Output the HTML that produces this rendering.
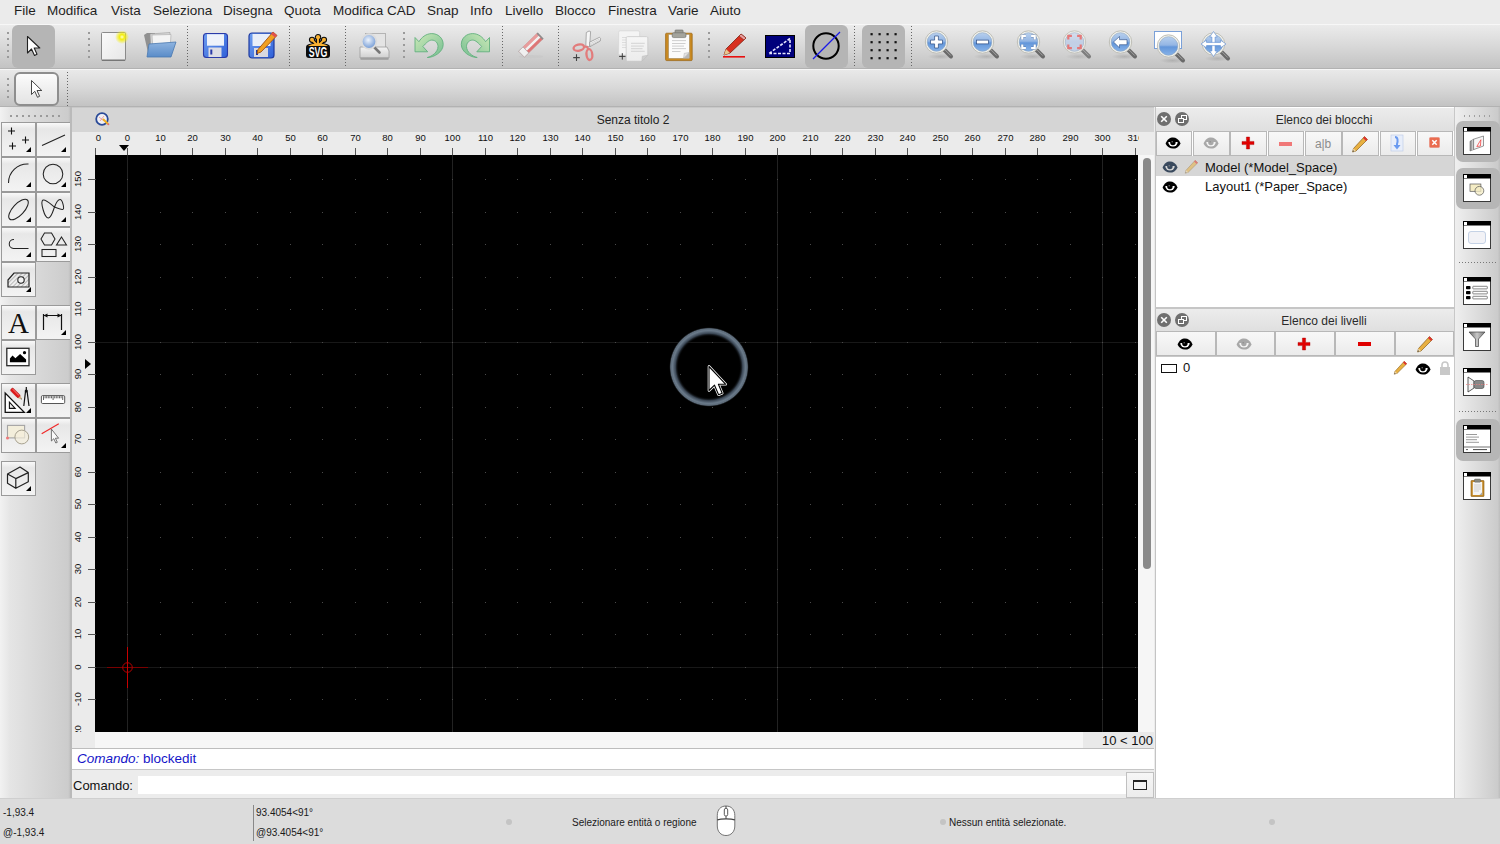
<!DOCTYPE html>
<html><head><meta charset="utf-8">
<style>
*{box-sizing:border-box;margin:0;padding:0}
html,body{width:1500px;height:844px;overflow:hidden;background:#ececec;font-family:"Liberation Sans",sans-serif;color:#000}
.a{position:absolute}
#menubar{position:absolute;left:0;top:0;width:1500px;height:24px;background:#ebebeb}
#menubar span{position:absolute;top:3px;font-size:13.5px;color:#1f1f1f;white-space:nowrap}
#tb1{position:absolute;left:0;top:24px;width:1500px;height:45px;background:linear-gradient(#ebebeb,#dadada 45%,#c3c3c3);border-top:1px solid #f7f7f7;border-bottom:1px solid #b2b2b2}
#tb2{position:absolute;left:0;top:69px;width:1500px;height:38px;background:linear-gradient(#e9e9e9,#d8d8d8 50%,#c3c3c3);border-top:1px solid #f6f6f6;border-bottom:1px solid #b2b2b2}
.grip{position:absolute;width:2px;background-image:radial-gradient(circle,#9a9a9a 0.9px,transparent 1.1px);background-size:2px 6px}
.vsep{position:absolute;width:1px;background-image:linear-gradient(#666 50%,transparent 50%);background-size:1px 3px}
.hsep{position:absolute;height:1px;background-image:linear-gradient(90deg,#666 50%,transparent 50%);background-size:3px 1px}
#leftpanel{position:absolute;left:0;top:107px;width:71px;height:691px;background:linear-gradient(90deg,#f2f2f2 0,#e5e5e5 14%,#d9d9d9 50%,#cccccc 96%,#bcbcbc 100%)}
.tbtn{position:absolute;width:35px;height:35px;background:linear-gradient(#f9f9f9 0,#e7e7e7 18%,#ececec 50%,#f3f3f3 100%);border:1px solid #9a9a9a}
.tbtn .tri{position:absolute;right:4px;bottom:4px;width:0;height:0;border-left:5px solid transparent;border-bottom:5px solid #000}
#mdi{position:absolute;left:72px;top:107px;width:1082px;height:642px;background:#ebebeb}
.rl{position:absolute;width:40px;text-align:center;font-size:9.5px;line-height:12px;color:#111;top:132px;height:12px}
.vl{position:absolute;width:40px;text-align:center;font-size:9.5px;line-height:12px;color:#111;transform:rotate(-90deg)}
#cmd{position:absolute;left:72px;top:748px;width:1082px;height:50px;background:#ececec}
#status{position:absolute;left:0;top:798px;width:1500px;height:46px;background:#dcdcdc;border-top:1px solid #cfcfcf}
#status span{position:absolute;font-size:10px;color:#1a1a1a;white-space:nowrap}
#dock{position:absolute;left:1155px;top:107px;width:300px;height:691px;background:#fff}
.dtitle{position:absolute;left:0;width:301px;height:23px;background:linear-gradient(#ececec,#dfdfdf);}
.dtitle .t{position:absolute;left:36px;width:264px;text-align:center;top:4px;font-size:12px;color:#2a2a2a}
.dbtn{position:absolute;height:25px;background:linear-gradient(#f8f8f8,#ebebeb);border:1px solid #b8b8b8}
.circ{position:absolute;width:14px;height:14px;border-radius:50%;background:#6f6f6f}
#rtb{position:absolute;left:1455px;top:107px;width:45px;height:691px;background:linear-gradient(90deg,#efefef,#dcdcdc 50%,#cbcbcb 95%,#bdbdbd)}
.rbtn{position:absolute;left:1px;width:42px;height:42px;border-radius:7px;background:#b9b9b9}
.wicon{position:absolute;left:8px;width:28px;height:28px;background:#fff;border:1px solid #222}
.wicon:before{content:"";position:absolute;left:0;top:0;width:26px;height:5px;background:#000}
.wicon:after{content:"";position:absolute;left:1px;top:1px;width:4px;height:4px;background:#fff}
</style></head><body>

<div id="menubar">
<span style="left:14px">File</span>
<span style="left:47px">Modifica</span>
<span style="left:111px">Vista</span>
<span style="left:153px">Seleziona</span>
<span style="left:223px">Disegna</span>
<span style="left:284px">Quota</span>
<span style="left:333px">Modifica CAD</span>
<span style="left:427px">Snap</span>
<span style="left:470px">Info</span>
<span style="left:505px">Livello</span>
<span style="left:555px">Blocco</span>
<span style="left:608px">Finestra</span>
<span style="left:668px">Varie</span>
<span style="left:710px">Aiuto</span>
</div>

<div id="tb1"><div class="grip" style="left:7px;top:5px;height:28px"></div>
<div class="a" style="left:12px;top:0px;width:43px;height:43px;border-radius:6px;background:#b5b5b5"></div>
<svg class="a" style="left:26px;top:10px" width="16" height="22" viewBox="0 0 16 22"><path d="M1.5 1.5 L1.5 18 L5.5 14 L8.5 20.5 L11 19.3 L8.2 13 L13.8 13 Z" fill="#fff" stroke="#222" stroke-width="1.1" stroke-linejoin="round"/></svg>
<div class="grip" style="left:88px;top:5px;height:28px"></div>
<!-- new -->
<svg class="a" style="left:100px;top:6px" width="30" height="32">
 <defs><radialGradient id="glow"><stop offset="0" stop-color="#ffffd0"/><stop offset=".35" stop-color="#f4ee10"/><stop offset="1" stop-color="#f4ee10" stop-opacity="0"/></radialGradient>
 <linearGradient id="pg" x1="0" y1="0" x2="1" y2="1"><stop offset="0" stop-color="#fafafa"/><stop offset="1" stop-color="#e6e6e6"/></linearGradient></defs>
 <rect x="1.5" y="1.5" width="24" height="28" fill="url(#pg)" stroke="#8a8a8a" rx="1"/>
 <rect x="2" y="28.5" width="23" height="1.5" fill="#777"/>
 <circle cx="22" cy="6" r="7" fill="url(#glow)"/>
</svg>
<!-- open -->
<svg class="a" style="left:143px;top:6px" width="36" height="28">
 <defs><linearGradient id="fb" x1="0" y1="0" x2="0" y2="1"><stop offset="0" stop-color="#8fb4e0"/><stop offset="1" stop-color="#5a8cc8"/></linearGradient></defs>
 <path d="M1 4 L4 2 L12 2 L12 22 L6 26 Z" fill="#909090"/>
 <path d="M7 3 L27 1.5 L26 18 L8 20 Z" fill="#d8d8d8" stroke="#9a9a9a" stroke-width=".6"/>
 <path d="M9 4 L28 3.5 L27 19 L10 21 Z" fill="#f4f4f4" stroke="#a8a8a8" stroke-width=".6"/>
 <path d="M6 13 L33 11 L28 26 L4 26 Z" fill="url(#fb)" stroke="#4a78b0" stroke-width=".8"/>
</svg>
<div class="vsep" style="left:187px;top:1px;height:41px"></div>
<!-- save -->
<svg class="a" style="left:202px;top:7px" width="28" height="28">
 <defs><linearGradient id="fl" x1="0" y1="0" x2="1" y2="1"><stop offset="0" stop-color="#6f9ff0"/><stop offset="1" stop-color="#2f60d8"/></linearGradient></defs>
 <rect x="1.5" y="1.5" width="24" height="24" rx="3" fill="url(#fl)" stroke="#2a3aa8" stroke-width="1.1"/>
 <rect x="5" y="2.2" width="17" height="11.5" fill="#eef2fa"/>
 <rect x="6.5" y="15.5" width="13" height="9.5" fill="#dcdce4"/>
 <rect x="8.3" y="17.5" width="2" height="5" fill="#2a3aa8"/>
</svg>
<!-- save as -->
<svg class="a" style="left:248px;top:6px" width="30" height="29">
 <rect x="1" y="2" width="25" height="25" rx="3" fill="url(#fl)" stroke="#1e3aa0" stroke-width="1.2"/>
 <rect x="4.5" y="3" width="18" height="12" fill="#e8eef8"/>
 <rect x="6" y="17" width="14" height="9" fill="#d8d8e0"/>
 <rect x="8" y="19" width="2" height="5" fill="#1e3aa0"/>
 <path d="M25 1 L29 4.5 L13 21 L9 22.5 L10 18.5 Z" fill="#f0a020" stroke="#a05010" stroke-width=".9"/>
 <path d="M25 1 L29 4.5 L27 6.5 L23 3 Z" fill="#e05050"/>
</svg>
<div class="vsep" style="left:289px;top:1px;height:41px"></div>
<!-- svg -->
<svg class="a" style="left:305px;top:8px" width="27" height="26">
 <g fill="#0c0c0c" stroke="#0c0c0c" stroke-width="2.2" stroke-linejoin="round"><circle cx="13" cy="4.2" r="2.1"/><circle cx="7" cy="6.8" r="2"/><circle cx="19" cy="6.8" r="2"/><path d="M3 12.9 C 6 11.2, 9 10.8, 13 10.6 C 17 10.8, 20 11.2, 23 12.9 Z"/></g>
 <g fill="none" stroke="#0c0c0c"><path d="M13 4.2 V12 M7 6.8 L12 12 M19 6.8 L14 12" stroke-width="4.2" stroke-linecap="round"/></g>
 <rect x="1" y="11.5" width="24" height="13.5" rx="3" fill="#0c0c0c"/>
 <g fill="#f9b233"><circle cx="13" cy="4.2" r="2.1"/><circle cx="7" cy="6.8" r="2"/><circle cx="19" cy="6.8" r="2"/><path d="M3 12.9 C 6 11.2, 9 10.8, 13 10.6 C 17 10.8, 20 11.2, 23 12.9 Z"/></g>
 <g fill="none" stroke="#f9b233"><path d="M13 4.2 V12 M7 6.8 L12 12 M19 6.8 L14 12" stroke-width="1.9" stroke-linecap="round"/></g>
 <text x="13" y="24" font-family="Liberation Sans" font-weight="bold" font-size="14" fill="#fff" text-anchor="middle" textLength="18.6" lengthAdjust="spacingAndGlyphs">SVG</text>
</svg>
<div class="vsep" style="left:345px;top:1px;height:41px"></div>
<!-- print preview -->
<svg class="a" style="left:358px;top:7px" width="32" height="29">
 <defs><linearGradient id="pr" x1="0" y1="0" x2="0" y2="1"><stop offset="0" stop-color="#f4f4f4"/><stop offset="1" stop-color="#cfcfcf"/></linearGradient>
 <radialGradient id="lens" cx=".45" cy=".4" r=".6"><stop offset="0" stop-color="#eef4fc"/><stop offset="1" stop-color="#6f98d4"/></radialGradient></defs>
 <rect x="7.5" y="1.5" width="20" height="14" fill="#e4e4e4" stroke="#a8a8a8" stroke-width=".8"/>
 <path d="M2 15 L29 15 L31 19 L31 26 L2 26 L2 19 Z" fill="url(#pr)" stroke="#9c9c9c" stroke-width=".8"/>
 <rect x="2.5" y="25.5" width="28" height="2.5" fill="#8a8a8a" opacity=".55"/>
 <line x1="15" y1="14" x2="21.5" y2="20.5" stroke="#777" stroke-width="2.6" stroke-linecap="round"/>
 <circle cx="11" cy="9.5" r="7.3" fill="url(#lens)" stroke="#dcdcdc" stroke-width="1.8"/>
</svg>
<div class="grip" style="left:403px;top:5px;height:28px"></div>
<!-- undo -->
<svg class="a" style="left:410px;top:3px" width="40" height="34">
 <defs><linearGradient id="ug" x1="0" y1="0" x2="1" y2="1"><stop offset="0" stop-color="#cde9b8"/><stop offset="1" stop-color="#74be90"/></linearGradient></defs>
 <path d="M5 9.5 L5 23.8 L17.7 23.8 L12.9 18.5 C 16 15, 19 12.1, 21.8 12.1 C 25.5 12.1, 28 15, 28 18.5 C 28 24, 22 28.5, 17.3 29.5 C 24 29.5, 33.2 24, 33.2 16.5 C 33.2 10, 28 5.6, 21.8 5.6 C 16 5.6, 11.5 9.5, 8.9 13.7 Z" fill="url(#ug)" stroke="#62b07e" stroke-width=".9" stroke-linejoin="round"/>
</svg>
<!-- redo -->
<svg class="a" style="left:455.5px;top:3px" width="40" height="34">
 <path d="M5 9.5 L5 23.8 L17.7 23.8 L12.9 18.5 C 16 15, 19 12.1, 21.8 12.1 C 25.5 12.1, 28 15, 28 18.5 C 28 24, 22 28.5, 17.3 29.5 C 24 29.5, 33.2 24, 33.2 16.5 C 33.2 10, 28 5.6, 21.8 5.6 C 16 5.6, 11.5 9.5, 8.9 13.7 Z" transform="translate(38.5 0) scale(-1 1)" fill="url(#ug)" stroke="#62b07e" stroke-width=".9" stroke-linejoin="round"/>
</svg>
<div class="vsep" style="left:502px;top:1px;height:41px"></div>
<!-- eraser -->
<svg class="a" style="left:512px;top:1px" width="40" height="38">
 <ellipse cx="19" cy="30.6" rx="12.5" ry="1.6" fill="#c8c8c8" opacity=".8"/>
 <g transform="translate(18.9 19.05) rotate(-44.2)">
  <rect x="-13.1" y="-4.15" width="26.2" height="8.3" fill="#de7676" stroke="#c8a0a0" stroke-width=".5"/>
  <rect x="-7" y="-4.15" width="20.1" height="2.85" fill="#e89c9c"/>
  <rect x="-7" y="-1.3" width="20.1" height="2.6" fill="#f2f2f2"/>
  <rect x="-13.1" y="-4.15" width="6.1" height="8.3" fill="#f0f0f0" stroke="#a8a8a8" stroke-width=".6"/>
  <rect x="12" y="-4.15" width="1.6" height="8.3" fill="#8c8c8c"/>
 </g>
</svg>
<div class="vsep" style="left:558px;top:1px;height:41px"></div>
<!-- cut -->
<svg class="a" style="left:568px;top:1px" width="40" height="38">
 <path d="M18.3 6.5 L21 5 L22.6 5.6 L21.6 20.5 L17.8 21 Z" fill="#f6f6f6" stroke="#8c8c8c" stroke-width=".7" stroke-linejoin="round"/>
 <path d="M21.6 16.2 L31.5 11.3 L32.5 12.3 L32.3 15 L22 20.6 Z" fill="#f6f6f6" stroke="#8c8c8c" stroke-width=".7" stroke-linejoin="round"/>
 <path d="M22.5 17.6 L31.5 13 M22.4 19.2 L31.8 14.3" stroke="#b0b0b0" stroke-width=".5"/>
 <ellipse cx="10.8" cy="21.6" rx="5.3" ry="3.1" transform="rotate(-12 10.8 21.6)" fill="none" stroke="#e27c7c" stroke-width="2.3"/>
 <ellipse cx="21.4" cy="28.6" rx="2.9" ry="5.4" transform="rotate(-6 21.4 28.6)" fill="none" stroke="#e27c7c" stroke-width="2.3"/>
 <path d="M15.5 20.5 L19 20.8 L20.5 23.5" fill="none" stroke="#e27c7c" stroke-width="2.2"/>
 <path d="M5.2 31.6 H11.8 M8.5 28.3 V34.9" stroke="#444" stroke-width="1.1"/>
</svg>
<!-- copy -->
<svg class="a" style="left:612px;top:1px" width="86" height="38">
 <defs><linearGradient id="pgc" x1="0" y1="0" x2="0" y2="1"><stop offset="0" stop-color="#f6f6f6"/><stop offset="1" stop-color="#ececec"/></linearGradient></defs>
 <rect x="6.6" y="4.8" width="21" height="24.2" rx="1.5" fill="#f4f4f4" stroke="#d4d4d4" stroke-width=".7"/>
 <g stroke="#dadada" stroke-width=".9"><line x1="10" y1="11.5" x2="14" y2="11.5"/><line x1="10" y1="14" x2="14" y2="14"/><line x1="10" y1="16.5" x2="14" y2="16.5"/><line x1="10" y1="19" x2="14" y2="19"/><line x1="10" y1="21.5" x2="14" y2="21.5"/></g>
 <path d="M15.5 10.6 H34.5 A1.3 1.3 0 0 1 35.8 11.9 V29.3 L29.8 35.3 H15.5 A1.3 1.3 0 0 1 14.2 34 V11.9 A1.3 1.3 0 0 1 15.5 10.6 Z" fill="url(#pgc)" stroke="#c4c4c4" stroke-width=".7"/>
 <path d="M29.8 35.3 L30.3 30.2 L35.8 29.3 Z" fill="#cfcfcf" stroke="#b8b8b8" stroke-width=".5"/>
 <g stroke="#d0d0d0" stroke-width=".9"><line x1="19" y1="17.3" x2="32.7" y2="17.3"/><line x1="19" y1="20.1" x2="31.8" y2="20.1"/><line x1="19" y1="22.7" x2="30.5" y2="22.7"/><line x1="19" y1="25.3" x2="32.7" y2="25.3"/></g>
 <path d="M7.1 30.4 H13.5 M10.3 27.2 V33.6" stroke="#3a3a3a" stroke-width="1"/>
 <!-- paste -->
 <rect x="53.6" y="7.2" width="26.6" height="27.4" rx="1" fill="#c98a22" stroke="#9a6210" stroke-width=".7"/>
 <rect x="56.8" y="8.6" width="20.4" height="23.6" fill="#fbfbfb" stroke="#9a9a9a" stroke-width=".4"/>
 <path d="M71.5 32.2 L77.2 26.5 V32.2 Z" fill="#b8b8b8"/>
 <path d="M71.5 32.2 L72.3 27.3 L77.2 26.5 Z" fill="#e6e6e6" stroke="#a0a0a0" stroke-width=".4"/>
 <rect x="63" y="4" width="8.1" height="3.6" rx=".8" fill="#9c9c94" stroke="#6a6a64" stroke-width=".6"/>
 <rect x="60.2" y="6.8" width="13.8" height="4.8" rx="1.4" fill="#a4a49c" stroke="#6a6a64" stroke-width=".6"/>
 <g stroke="#c8c8c8" stroke-width=".9"><line x1="60" y1="14.6" x2="74" y2="14.6"/><line x1="60" y1="17.5" x2="73.5" y2="17.5"/><line x1="60" y1="20.1" x2="72" y2="20.1"/><line x1="60" y1="22.6" x2="74" y2="22.6"/><line x1="60" y1="25.5" x2="68.5" y2="25.5"/></g>
</svg>
<div class="grip" style="left:708px;top:5px;height:28px"></div>
<!-- pencil red line -->
<svg class="a" style="left:722px;top:8px" width="26" height="25">
 <path d="M19 1 L24 5 L8 20 L2 22 L4 16 Z" fill="#d83020" stroke="#802010" stroke-width=".8"/>
 <path d="M19 1 L24 5 L22 7 L17 3 Z" fill="#e8a0a0" stroke="#802010" stroke-width=".6"/>
 <path d="M4 16 L8 20 L2 22 Z" fill="#e8c890"/>
 <rect x="1" y="23" width="22" height="1.6" fill="#e81010"/>
</svg>
<!-- blue rect -->
<svg class="a" style="left:765px;top:10px" width="30" height="23">
 <rect x=".5" y=".5" width="29" height="22" fill="#00007c" stroke="#000" stroke-width="1"/>
 <path d="M4 18.5 L25 18.5 L25 3.5 Z" fill="none" stroke="#e8e8ff" stroke-width="1.6" stroke-dasharray="3 1.5"/>
</svg>
<div class="a" style="left:805px;top:0px;width:43px;height:43px;border-radius:6px;background:#b5b5b5"></div>
<svg class="a" style="left:810px;top:4.5px" width="32" height="32">
 <circle cx="16" cy="16" r="12.7" fill="none" stroke="#000" stroke-width="2"/>
 <line x1="3" y1="29" x2="30" y2="2" stroke="#1a1ae8" stroke-width="1.2"/>
</svg>
<div class="vsep" style="left:854px;top:1px;height:41px"></div>
<div class="a" style="left:862px;top:0px;width:43px;height:43px;border-radius:6px;background:#b5b5b5"></div>
<svg class="a" style="left:869px;top:8px" width="28" height="28">
 <g fill="#111">
  <rect x="1.5" y="0.1" width="2.2" height="2.2"/><rect x="9.5" y="0.1" width="2.2" height="2.2"/><rect x="17.5" y="0.1" width="2.2" height="2.2"/><rect x="25.5" y="0.1" width="2.2" height="2.2"/>
  <rect x="1.5" y="8.1" width="2.2" height="2.2"/><rect x="9.5" y="8.1" width="2.2" height="2.2"/><rect x="17.5" y="8.1" width="2.2" height="2.2"/><rect x="25.5" y="8.1" width="2.2" height="2.2"/>
  <rect x="1.5" y="16.1" width="2.2" height="2.2"/><rect x="9.5" y="16.1" width="2.2" height="2.2"/><rect x="17.5" y="16.1" width="2.2" height="2.2"/><rect x="25.5" y="16.1" width="2.2" height="2.2"/>
  <rect x="1.5" y="24.1" width="2.2" height="2.2"/><rect x="9.5" y="24.1" width="2.2" height="2.2"/><rect x="17.5" y="24.1" width="2.2" height="2.2"/><rect x="25.5" y="24.1" width="2.2" height="2.2"/>
 </g>
</svg>
<div class="vsep" style="left:911px;top:1px;height:41px"></div>
<svg class="a" style="left:900px;top:0px" width="340" height="45">
<defs>
<linearGradient id="lb" x1="0" y1="0" x2="0" y2="1"><stop offset="0" stop-color="#b8d0ee"/><stop offset=".45" stop-color="#94b6e4"/><stop offset=".55" stop-color="#6396da"/><stop offset="1" stop-color="#86b2e8"/></linearGradient>
<linearGradient id="lbf" x1="0" y1="0" x2="0" y2="1"><stop offset="0" stop-color="#d4def0"/><stop offset=".5" stop-color="#bccde8"/><stop offset="1" stop-color="#c0d0ea"/></linearGradient>
<radialGradient id="sh" cx=".5" cy=".5" r=".5"><stop offset="0" stop-color="#000" stop-opacity=".13"/><stop offset="1" stop-color="#000" stop-opacity="0"/></radialGradient>
</defs>
<ellipse cx="40.5" cy="31.5" rx="13" ry="3" fill="url(#sh)"/><line x1="44.5" y1="25" x2="51.0" y2="31.5" stroke="#6a6a6a" stroke-width="4" stroke-linecap="round"/><line x1="45.5" y1="25.3" x2="50.5" y2="30.3" stroke="#a0a0a0" stroke-width="1" stroke-linecap="round"/><circle cx="36.5" cy="17" r="11.2" fill="#f2f2ec" stroke="#b8b8b0" stroke-width=".9"/><circle cx="36.5" cy="17" r="9.3" fill="url(#lb)" stroke="#8aa2c0" stroke-width=".6"/><path d="M34.6 11 h3.8 v4.1 h4.1 v3.8 h-4.1 v4.1 h-3.8 v-4.1 h-4.1 v-3.8 h4.1 z" fill="#fff" stroke="#2a4a80" stroke-width=".7"/>
<ellipse cx="86.5" cy="31.5" rx="13" ry="3" fill="url(#sh)"/><line x1="90.5" y1="25" x2="97.0" y2="31.5" stroke="#6a6a6a" stroke-width="4" stroke-linecap="round"/><line x1="91.5" y1="25.3" x2="96.5" y2="30.3" stroke="#a0a0a0" stroke-width="1" stroke-linecap="round"/><circle cx="82.5" cy="17" r="11.2" fill="#f2f2ec" stroke="#b8b8b0" stroke-width=".9"/><circle cx="82.5" cy="17" r="9.3" fill="url(#lb)" stroke="#8aa2c0" stroke-width=".6"/><rect x="76.5" y="15.1" width="12" height="3.8" fill="#fff" stroke="#2a4a80" stroke-width=".7"/>
<ellipse cx="132.5" cy="31.5" rx="13" ry="3" fill="url(#sh)"/><line x1="136.5" y1="25" x2="143.0" y2="31.5" stroke="#6a6a6a" stroke-width="4" stroke-linecap="round"/><line x1="137.5" y1="25.3" x2="142.5" y2="30.3" stroke="#a0a0a0" stroke-width="1" stroke-linecap="round"/><circle cx="128.5" cy="17" r="11.2" fill="#f2f2ec" stroke="#b8b8b0" stroke-width=".9"/><circle cx="128.5" cy="17" r="9.3" fill="url(#lb)" stroke="#8aa2c0" stroke-width=".6"/><g stroke="#2a4a80" stroke-width="3.4" opacity=".5"><path d="M122.3 14.4 V10.8 H125.89999999999999" fill="none" stroke="#2a4a80" stroke-width="3.2"/><path d="M122.3 19.599999999999998 V23.2 H125.89999999999999" fill="none" stroke="#2a4a80" stroke-width="3.2"/><path d="M134.7 14.4 V10.8 H131.1" fill="none" stroke="#2a4a80" stroke-width="3.2"/><path d="M134.7 19.599999999999998 V23.2 H131.1" fill="none" stroke="#2a4a80" stroke-width="3.2"/></g><path d="M122.3 14.4 V10.8 H125.89999999999999" fill="none" stroke="#fff" stroke-width="2.2"/><path d="M122.3 19.599999999999998 V23.2 H125.89999999999999" fill="none" stroke="#fff" stroke-width="2.2"/><path d="M134.7 14.4 V10.8 H131.1" fill="none" stroke="#fff" stroke-width="2.2"/><path d="M134.7 19.599999999999998 V23.2 H131.1" fill="none" stroke="#fff" stroke-width="2.2"/>
<g opacity=".8"><ellipse cx="178.5" cy="31.5" rx="13" ry="3" fill="url(#sh)"/><line x1="182.5" y1="25" x2="189.0" y2="31.5" stroke="#6a6a6a" stroke-width="4" stroke-linecap="round"/><line x1="183.5" y1="25.3" x2="188.5" y2="30.3" stroke="#a0a0a0" stroke-width="1" stroke-linecap="round"/><circle cx="174.5" cy="17" r="11.2" fill="#f2f2ec" stroke="#b8b8b0" stroke-width=".9"/><circle cx="174.5" cy="17" r="9.3" fill="url(#lbf)" stroke="#8aa2c0" stroke-width=".6"/><path d="M168.3 14.4 V10.8 H171.9" fill="none" stroke="#e86060" stroke-width="2.2"/><path d="M168.3 19.599999999999998 V23.2 H171.9" fill="none" stroke="#e86060" stroke-width="2.2"/><path d="M180.7 14.4 V10.8 H177.1" fill="none" stroke="#e86060" stroke-width="2.2"/><path d="M180.7 19.599999999999998 V23.2 H177.1" fill="none" stroke="#e86060" stroke-width="2.2"/></g>
<ellipse cx="224.5" cy="31.5" rx="13" ry="3" fill="url(#sh)"/><line x1="228.5" y1="25" x2="235.0" y2="31.5" stroke="#6a6a6a" stroke-width="4" stroke-linecap="round"/><line x1="229.5" y1="25.3" x2="234.5" y2="30.3" stroke="#a0a0a0" stroke-width="1" stroke-linecap="round"/><circle cx="220.5" cy="17" r="11.2" fill="#f2f2ec" stroke="#b8b8b0" stroke-width=".9"/><circle cx="220.5" cy="17" r="9.3" fill="url(#lb)" stroke="#8aa2c0" stroke-width=".6"/><path d="M213.5 17 L219.5 11.5 V14.7 H227.0 V19.7 H219.5 V22.8 Z" fill="#fff" stroke="#2a4a80" stroke-width=".6"/>
<rect x="254.5" y="6.5" width="27" height="17" fill="#fff" stroke="#7aa0d8" stroke-width="1"/>
<ellipse cx="272.5" cy="35.5" rx="13" ry="3" fill="url(#sh)"/><line x1="276.5" y1="29" x2="283.0" y2="35.5" stroke="#6a6a6a" stroke-width="4" stroke-linecap="round"/><line x1="277.5" y1="29.3" x2="282.5" y2="34.3" stroke="#a0a0a0" stroke-width="1" stroke-linecap="round"/><circle cx="268.5" cy="21" r="11.2" fill="#f2f2ec" stroke="#b8b8b0" stroke-width=".9"/><circle cx="268.5" cy="21" r="9.3" fill="url(#lb)" stroke="#8aa2c0" stroke-width=".6"/>
<ellipse cx="317.5" cy="33.5" rx="13" ry="3" fill="url(#sh)"/><line x1="321.5" y1="27" x2="328.0" y2="33.5" stroke="#6a6a6a" stroke-width="4" stroke-linecap="round"/><line x1="322.5" y1="27.3" x2="327.5" y2="32.3" stroke="#a0a0a0" stroke-width="1" stroke-linecap="round"/><circle cx="313.5" cy="19" r="11.2" fill="#f2f2ec" stroke="#b8b8b0" stroke-width=".9"/><circle cx="313.5" cy="19" r="9.3" fill="url(#lb)" stroke="#8aa2c0" stroke-width=".6"/><g fill="#fff" stroke="#5a8ad0" stroke-width=".6">
<path d="M313.5 6.5 L317.3 12 H315.1 V26 H317.3 L313.5 31.5 L309.7 26 H311.9 V12 H309.7 Z"/>
<path d="M301.0 19 L306.5 15.2 V17.4 H320.5 V15.2 L326.0 19 L320.5 22.8 V20.6 H306.5 V22.8 Z"/>
</g>
</svg>
</div>
<div id="tb2"><div class="grip" style="left:7px;top:5.5px;height:26px"></div>
<div class="a" style="left:14px;top:2px;width:45px;height:34px;border-radius:6px;border:2px solid #8e8e8e;background:linear-gradient(#fcfcfc,#eeeeee 55%,#e4e4e4)"></div>
<svg class="a" style="left:30px;top:9px" width="14" height="20" viewBox="0 0 14 20"><path d="M1.5 1.5 L1.5 15.5 L4.8 12.3 L7.5 18.3 L9.6 17.3 L7 11.5 L11.8 11.5 Z" fill="#fff" stroke="#333" stroke-width=".9" stroke-linejoin="round"/></svg>
<div class="vsep" style="left:67px;top:2px;height:35px"></div>
</div>

<div id="leftpanel"><div class="grip" style="left:8px;top:7px;width:56px;height:4px;background-image:radial-gradient(circle,#9a9a9a 0.9px,transparent 1.1px);background-size:6px 4px"></div>
<div class="tbtn" style="left:1px;top:15px;width:35px;height:35px"><svg class="a" style="left:0;top:0" width="33" height="33"><path d="M6.0 8 H13.0 M9.5 4.5 V11.5" stroke="#111" stroke-width="1.1"/><path d="M20.0 17 H27.0 M23.5 13.5 V20.5" stroke="#111" stroke-width="1.1"/><path d="M7.0 23 H14.0 M10.5 19.5 V26.5" stroke="#111" stroke-width="1.1"/></svg><div class="tri"></div></div>
<div class="tbtn" style="left:36px;top:15px;width:35px;height:35px"><svg class="a" style="left:0;top:0" width="33" height="33"><path d="M5 22.5 L28 12" fill="none" stroke="#222" stroke-width="1.05"/></svg><div class="tri"></div></div>
<div class="tbtn" style="left:1px;top:50px;width:35px;height:35px"><svg class="a" style="left:0;top:0" width="33" height="33"><path d="M6.5 25 A19 19 0 0 1 26.5 6" fill="none" stroke="#222" stroke-width="1.05"/></svg><div class="tri"></div></div>
<div class="tbtn" style="left:36px;top:50px;width:35px;height:35px"><svg class="a" style="left:0;top:0" width="33" height="33"><circle cx="16" cy="16" r="9.8" fill="none" stroke="#222" stroke-width="1.05"/></svg><div class="tri"></div></div>
<div class="tbtn" style="left:1px;top:85px;width:35px;height:35px"><svg class="a" style="left:0;top:0" width="33" height="33"><ellipse cx="16.5" cy="16.5" rx="13" ry="5.6" transform="rotate(-47 16.5 16.5)" fill="none" stroke="#222" stroke-width="1.05"/></svg><div class="tri"></div></div>
<div class="tbtn" style="left:36px;top:85px;width:35px;height:35px"><svg class="a" style="left:0;top:0" width="33" height="33"><path d="M17.5 14 C14 11.5, 9 6, 6 7 C3 8.5, 7.5 25.5, 11.5 25 C14.5 24.5, 16 18, 17.5 14 C19 10, 21 6.5, 23 6.5 C25.5 6.5, 27.5 15.5, 26 16.3 C24.5 17, 21 15.5, 17.5 14 Z" fill="none" stroke="#222" stroke-width="1.05"/></svg><div class="tri"></div></div>
<div class="tbtn" style="left:1px;top:120px;width:35px;height:35px"><svg class="a" style="left:0;top:0" width="33" height="33"><path d="M12 11.5 A4.5 4.5 0 0 0 11.5 20.5 L26.5 20.5" fill="none" stroke="#222" stroke-width="1.05"/></svg><div class="tri"></div></div>
<div class="tbtn" style="left:36px;top:120px;width:35px;height:35px"><svg class="a" style="left:0;top:0" width="33" height="33"><path d="M7.5 5 H14.5 L18 11 L14.5 17 H7.5 L4 11 Z" fill="none" stroke="#222" stroke-width="1.05"/><path d="M24.5 9 L29.5 17 H19.5 Z" fill="none" stroke="#222" stroke-width="1.05"/><rect x="5" y="21.5" width="14" height="7" fill="none" stroke="#222" stroke-width="1.05"/></svg><div class="tri"></div></div>
<div class="tbtn" style="left:1px;top:155px;width:35px;height:35px"><svg class="a" style="left:0;top:0" width="33" height="33"><defs><pattern id="ht" width="3" height="3" patternUnits="userSpaceOnUse" patternTransform="rotate(45)"><line x1="0" y1="0" x2="0" y2="3" stroke="#666" stroke-width=".8"/></pattern></defs><path d="M6 17 L12 10 H27 V24 H6 Z" fill="url(#ht)" stroke="#222" stroke-width="1.2"/><circle cx="19" cy="17" r="3.2" fill="#f2f2f2" stroke="#222" stroke-width="1.1"/></svg><div class="tri"></div></div>
<div class="tbtn" style="left:1px;top:198px;width:35px;height:35px"><svg class="a" style="left:0;top:0" width="33" height="33"><text x="16.5" y="27" font-family="Liberation Serif" font-size="29" text-anchor="middle" fill="#111">A</text></svg></div>
<div class="tbtn" style="left:36px;top:198px;width:35px;height:35px"><svg class="a" style="left:0;top:0" width="33" height="33"><path d="M6.5 8 V24 M24.5 8 V24 M6.5 9.5 H24.5" fill="none" stroke="#111" stroke-width="1.2"/><path d="M6.5 9.5 L10.5 7.5 V11.5 Z M24.5 9.5 L20.5 7.5 V11.5 Z" fill="#111"/></svg><div class="tri"></div></div>
<div class="tbtn" style="left:1px;top:233px;width:35px;height:35px"><svg class="a" style="left:0;top:0" width="33" height="33"><rect x="4.8" y="7.3" width="22.2" height="17.4" fill="#fff" stroke="#2a2a2a" stroke-width="1.3"/><path d="M7.9 21.3 V17.4 L10.5 14.6 L13.4 17.2 L18.1 13 L24.1 18.6 V21.3 Z" fill="#000"/><circle cx="22.5" cy="11.7" r="1.6" fill="#000"/></svg></div>
<div class="tbtn" style="left:1px;top:276px;width:35px;height:35px"><svg class="a" style="left:0;top:0" width="33" height="33"><path d="M3.2 9 V28.4 H22.3 Z" fill="#fff" stroke="#111" stroke-width="1.3" stroke-linejoin="miter"/><path d="M7.4 18.1 V24.4 H13.2 Z" fill="#eee" stroke="#111" stroke-width="1.1"/><g transform="translate(14.2 9.8) rotate(45)"><rect x="-7" y="-1.9" width="11.5" height="3.8" rx="1.6" fill="#e01818" stroke="#a01010" stroke-width=".4"/><path d="M4.5 -1.9 L8 0 L4.5 1.9 Z" fill="#d8b080"/><path d="M6.8 -.6 L8 0 L6.8 .6 Z" fill="#333"/><rect x="-6" y="-1.2" width="9" height=".8" fill="#f07070"/></g><path d="M24.3 3 V6 M23.5 7.5 L21.8 22 M25.1 7.5 L27 22" fill="none" stroke="#111" stroke-width="1.2"/><circle cx="24.3" cy="7" r="1.6" fill="#111"/></svg><div class="tri"></div></div>
<div class="tbtn" style="left:36px;top:276px;width:35px;height:35px"><svg class="a" style="left:0;top:0" width="33" height="33"><rect x="4.4" y="11.6" width="23.3" height="7.9" rx="1.2" fill="#fff" stroke="#444" stroke-width=".9"/><line x1="6.5" y1="12.2" x2="6.5" y2="16" stroke="#222" stroke-width=".7"/><line x1="8.1" y1="12.2" x2="8.1" y2="14.3" stroke="#222" stroke-width=".7"/><line x1="9.7" y1="12.2" x2="9.7" y2="14.3" stroke="#222" stroke-width=".7"/><line x1="11.3" y1="12.2" x2="11.3" y2="14.3" stroke="#222" stroke-width=".7"/><line x1="12.9" y1="12.2" x2="12.9" y2="14.3" stroke="#222" stroke-width=".7"/><line x1="14.5" y1="12.2" x2="14.5" y2="14.3" stroke="#222" stroke-width=".7"/><line x1="16.1" y1="12.2" x2="16.1" y2="16" stroke="#222" stroke-width=".7"/><line x1="17.7" y1="12.2" x2="17.7" y2="14.3" stroke="#222" stroke-width=".7"/><line x1="19.3" y1="12.2" x2="19.3" y2="14.3" stroke="#222" stroke-width=".7"/><line x1="20.9" y1="12.2" x2="20.9" y2="14.3" stroke="#222" stroke-width=".7"/><line x1="22.5" y1="12.2" x2="22.5" y2="14.3" stroke="#222" stroke-width=".7"/><line x1="24.1" y1="12.2" x2="24.1" y2="14.3" stroke="#222" stroke-width=".7"/><line x1="25.7" y1="12.2" x2="25.7" y2="16" stroke="#222" stroke-width=".7"/></svg></div>
<div class="tbtn" style="left:1px;top:311px;width:35px;height:35px"><svg class="a" style="left:0;top:0" width="33" height="33"><rect x="5.5" y="6.4" width="17.1" height="12.5" fill="#f3eedb" stroke="#a4a4a4" stroke-width="1.1"/><circle cx="19.8" cy="18" r="6.9" fill="#f3eedb" fill-opacity=".7" stroke="#a8a290" stroke-width="1"/><circle cx="5.5" cy="18.9" r="1.5" fill="#f07878"/></svg></div>
<div class="tbtn" style="left:36px;top:311px;width:35px;height:35px"><svg class="a" style="left:0;top:0" width="33" height="33"><path d="M4.7 14.7 L21.8 4.7" stroke="#f02828" stroke-width="1.2"/><path d="M14.4 10.1 V22 L16.8 19.7 L18.8 24 L20.3 23.3 L18.4 19.2 H21.6 Z" fill="#fafafa" stroke="#555" stroke-width=".8" stroke-linejoin="round"/></svg><div class="tri"></div></div>
<div class="tbtn" style="left:1px;top:354px;width:35px;height:35px"><svg class="a" style="left:0;top:0" width="33" height="33"><path d="M5.5 12 L18 5 L26.3 10.6 L13.8 16.6 Z M5.5 12 V21.2 L13.8 26.3 L26.3 19.8 V10.6 M13.8 16.6 V26.3" fill="none" stroke="#222" stroke-width="1.2" stroke-linejoin="round"/></svg><div class="tri"></div></div></div>
<div class="a" style="left:70px;top:107px;width:2px;height:691px;background:#bababa"></div><div class="a" style="left:72px;top:132px;width:1px;height:616px;background:#f4f4f4"></div>

<div id="mdi">
  <div class="a" style="left:0;top:0;width:1082px;height:25px;background:#d5d5d5;border-top:1px solid #c8c8c8"></div>
  <div class="a" style="left:0;top:6px;width:1122px;text-align:center;font-size:12px;color:#222">Senza titolo 2</div>
  <svg class="a" style="left:23px;top:5px" width="16" height="15">
 <circle cx="7" cy="7" r="5.8" fill="#f0f0f4" stroke="#2a4a98" stroke-width="1.8"/>
 <path d="M4 5 L9 9 M5 9 L9 4" stroke="#e07070" stroke-width=".6"/>
 <path d="M8 7 L13 12" stroke="#f0b020" stroke-width="2"/>
 <circle cx="13.3" cy="12.3" r="1" fill="#e07070"/>
</svg>

  <div class="a" style="left:0;top:25px;width:1082px;height:23px;background:#ebebeb"></div>
  <div class="a" style="left:0;top:48px;width:23px;height:577px;background:#ebebeb"></div>
  <div class="a" style="left:1066px;top:48px;width:16px;height:577px;background:#f6f6f6"></div>
  <div class="a" style="left:1071px;top:51px;width:8px;height:411px;border-radius:4px;background:#8a8a8a"></div>
  <div class="a" style="left:23px;top:625px;width:1059px;height:17px;background:#f6f6f6"></div>
  <div class="a" style="left:1011px;top:625px;width:71px;height:17px;background:#e9e9e9"></div>
  <div class="a" style="left:1011px;top:626px;width:70px;text-align:right;font-size:13px;color:#111">10 &lt; 100</div>
</div>
<div style="position:absolute;left:0;top:0;width:1500px;height:844px;overflow:hidden">
<div style="position:absolute;left:95px;top:132px;width:1044px;height:23px;overflow:hidden">
 <div style="position:absolute;left:-95px;top:-132px;width:1500px;height:200px"><div style="position:absolute;left:95px;top:148px;width:1px;height:7px;background:#555"></div><div class="rl" style="left:78.5px;">0</div><div style="position:absolute;left:127px;top:148px;width:1px;height:7px;background:#555"></div><div class="rl" style="left:107.5px;">0</div><div style="position:absolute;left:160px;top:148px;width:1px;height:7px;background:#555"></div><div class="rl" style="left:140.5px;">10</div><div style="position:absolute;left:192px;top:148px;width:1px;height:7px;background:#555"></div><div class="rl" style="left:172.5px;">20</div><div style="position:absolute;left:225px;top:148px;width:1px;height:7px;background:#555"></div><div class="rl" style="left:205.5px;">30</div><div style="position:absolute;left:257px;top:148px;width:1px;height:7px;background:#555"></div><div class="rl" style="left:237.5px;">40</div><div style="position:absolute;left:290px;top:148px;width:1px;height:7px;background:#555"></div><div class="rl" style="left:270.5px;">50</div><div style="position:absolute;left:322px;top:148px;width:1px;height:7px;background:#555"></div><div class="rl" style="left:302.5px;">60</div><div style="position:absolute;left:355px;top:148px;width:1px;height:7px;background:#555"></div><div class="rl" style="left:335.5px;">70</div><div style="position:absolute;left:387px;top:148px;width:1px;height:7px;background:#555"></div><div class="rl" style="left:367.5px;">80</div><div style="position:absolute;left:420px;top:148px;width:1px;height:7px;background:#555"></div><div class="rl" style="left:400.5px;">90</div><div style="position:absolute;left:452px;top:148px;width:1px;height:7px;background:#555"></div><div class="rl" style="left:432.5px;">100</div><div style="position:absolute;left:485px;top:148px;width:1px;height:7px;background:#555"></div><div class="rl" style="left:465.5px;">110</div><div style="position:absolute;left:517px;top:148px;width:1px;height:7px;background:#555"></div><div class="rl" style="left:497.5px;">120</div><div style="position:absolute;left:550px;top:148px;width:1px;height:7px;background:#555"></div><div class="rl" style="left:530.5px;">130</div><div style="position:absolute;left:582px;top:148px;width:1px;height:7px;background:#555"></div><div class="rl" style="left:562.5px;">140</div><div style="position:absolute;left:615px;top:148px;width:1px;height:7px;background:#555"></div><div class="rl" style="left:595.5px;">150</div><div style="position:absolute;left:647px;top:148px;width:1px;height:7px;background:#555"></div><div class="rl" style="left:627.5px;">160</div><div style="position:absolute;left:680px;top:148px;width:1px;height:7px;background:#555"></div><div class="rl" style="left:660.5px;">170</div><div style="position:absolute;left:712px;top:148px;width:1px;height:7px;background:#555"></div><div class="rl" style="left:692.5px;">180</div><div style="position:absolute;left:745px;top:148px;width:1px;height:7px;background:#555"></div><div class="rl" style="left:725.5px;">190</div><div style="position:absolute;left:777px;top:148px;width:1px;height:7px;background:#555"></div><div class="rl" style="left:757.5px;">200</div><div style="position:absolute;left:810px;top:148px;width:1px;height:7px;background:#555"></div><div class="rl" style="left:790.5px;">210</div><div style="position:absolute;left:842px;top:148px;width:1px;height:7px;background:#555"></div><div class="rl" style="left:822.5px;">220</div><div style="position:absolute;left:875px;top:148px;width:1px;height:7px;background:#555"></div><div class="rl" style="left:855.5px;">230</div><div style="position:absolute;left:907px;top:148px;width:1px;height:7px;background:#555"></div><div class="rl" style="left:887.5px;">240</div><div style="position:absolute;left:940px;top:148px;width:1px;height:7px;background:#555"></div><div class="rl" style="left:920.5px;">250</div><div style="position:absolute;left:972px;top:148px;width:1px;height:7px;background:#555"></div><div class="rl" style="left:952.5px;">260</div><div style="position:absolute;left:1005px;top:148px;width:1px;height:7px;background:#555"></div><div class="rl" style="left:985.5px;">270</div><div style="position:absolute;left:1037px;top:148px;width:1px;height:7px;background:#555"></div><div class="rl" style="left:1017.5px;">280</div><div style="position:absolute;left:1070px;top:148px;width:1px;height:7px;background:#555"></div><div class="rl" style="left:1050.5px;">290</div><div style="position:absolute;left:1102px;top:148px;width:1px;height:7px;background:#555"></div><div class="rl" style="left:1082.5px;">300</div><div style="position:absolute;left:1135px;top:148px;width:1px;height:7px;background:#555"></div><div class="rl" style="left:1115.5px;">310</div></div>
</div>
<!--HRULERTRI-->
<div style="position:absolute;left:72px;top:155px;width:23px;height:577px;overflow:hidden">
 <div style="position:absolute;left:-72px;top:-155px;width:200px;height:800px"><div class="vl" style="left:57.7px;top:726px;">-20</div><div style="position:absolute;left:88px;top:699px;width:7px;height:1px;background:#555"></div><div class="vl" style="left:57.7px;top:693px;">-10</div><div style="position:absolute;left:88px;top:667px;width:7px;height:1px;background:#555"></div><div class="vl" style="left:57.7px;top:661px;">0</div><div style="position:absolute;left:88px;top:634px;width:7px;height:1px;background:#555"></div><div class="vl" style="left:57.7px;top:628px;">10</div><div style="position:absolute;left:88px;top:602px;width:7px;height:1px;background:#555"></div><div class="vl" style="left:57.7px;top:596px;">20</div><div style="position:absolute;left:88px;top:569px;width:7px;height:1px;background:#555"></div><div class="vl" style="left:57.7px;top:563px;">30</div><div style="position:absolute;left:88px;top:537px;width:7px;height:1px;background:#555"></div><div class="vl" style="left:57.7px;top:531px;">40</div><div style="position:absolute;left:88px;top:504px;width:7px;height:1px;background:#555"></div><div class="vl" style="left:57.7px;top:498px;">50</div><div style="position:absolute;left:88px;top:472px;width:7px;height:1px;background:#555"></div><div class="vl" style="left:57.7px;top:466px;">60</div><div style="position:absolute;left:88px;top:439px;width:7px;height:1px;background:#555"></div><div class="vl" style="left:57.7px;top:433px;">70</div><div style="position:absolute;left:88px;top:407px;width:7px;height:1px;background:#555"></div><div class="vl" style="left:57.7px;top:401px;">80</div><div style="position:absolute;left:88px;top:374px;width:7px;height:1px;background:#555"></div><div class="vl" style="left:57.7px;top:368px;">90</div><div style="position:absolute;left:88px;top:342px;width:7px;height:1px;background:#555"></div><div class="vl" style="left:57.7px;top:336px;">100</div><div style="position:absolute;left:88px;top:309px;width:7px;height:1px;background:#555"></div><div class="vl" style="left:57.7px;top:303px;">110</div><div style="position:absolute;left:88px;top:277px;width:7px;height:1px;background:#555"></div><div class="vl" style="left:57.7px;top:271px;">120</div><div style="position:absolute;left:88px;top:244px;width:7px;height:1px;background:#555"></div><div class="vl" style="left:57.7px;top:238px;">130</div><div style="position:absolute;left:88px;top:212px;width:7px;height:1px;background:#555"></div><div class="vl" style="left:57.7px;top:206px;">140</div><div style="position:absolute;left:88px;top:179px;width:7px;height:1px;background:#555"></div><div class="vl" style="left:57.7px;top:173px;">150</div></div>
</div>
<svg width="1043" height="577" style="position:absolute;left:95px;top:155px;display:block" shape-rendering="crispEdges"><rect width="1043" height="577" fill="#000"/><rect x="32" y="0" width="1" height="577" fill="#222"/><rect x="357" y="0" width="1" height="577" fill="#222"/><rect x="682" y="0" width="1" height="577" fill="#222"/><rect x="1007" y="0" width="1" height="577" fill="#222"/><rect x="0" y="512" width="1043" height="1" fill="#181818"/><rect x="0" y="187" width="1043" height="1" fill="#181818"/><rect x="0" y="544" width="1" height="1" fill="#4a4a4a"/><rect x="0" y="512" width="1" height="1" fill="#4a4a4a"/><rect x="0" y="479" width="1" height="1" fill="#4a4a4a"/><rect x="0" y="447" width="1" height="1" fill="#4a4a4a"/><rect x="0" y="414" width="1" height="1" fill="#4a4a4a"/><rect x="0" y="382" width="1" height="1" fill="#4a4a4a"/><rect x="0" y="349" width="1" height="1" fill="#4a4a4a"/><rect x="0" y="317" width="1" height="1" fill="#4a4a4a"/><rect x="0" y="284" width="1" height="1" fill="#4a4a4a"/><rect x="0" y="252" width="1" height="1" fill="#4a4a4a"/><rect x="0" y="219" width="1" height="1" fill="#4a4a4a"/><rect x="0" y="187" width="1" height="1" fill="#4a4a4a"/><rect x="0" y="154" width="1" height="1" fill="#4a4a4a"/><rect x="0" y="122" width="1" height="1" fill="#4a4a4a"/><rect x="0" y="89" width="1" height="1" fill="#4a4a4a"/><rect x="0" y="57" width="1" height="1" fill="#4a4a4a"/><rect x="0" y="24" width="1" height="1" fill="#4a4a4a"/><rect x="32" y="544" width="1" height="1" fill="#4a4a4a"/><rect x="32" y="512" width="1" height="1" fill="#4a4a4a"/><rect x="32" y="479" width="1" height="1" fill="#4a4a4a"/><rect x="32" y="447" width="1" height="1" fill="#4a4a4a"/><rect x="32" y="414" width="1" height="1" fill="#4a4a4a"/><rect x="32" y="382" width="1" height="1" fill="#4a4a4a"/><rect x="32" y="349" width="1" height="1" fill="#4a4a4a"/><rect x="32" y="317" width="1" height="1" fill="#4a4a4a"/><rect x="32" y="284" width="1" height="1" fill="#4a4a4a"/><rect x="32" y="252" width="1" height="1" fill="#4a4a4a"/><rect x="32" y="219" width="1" height="1" fill="#4a4a4a"/><rect x="32" y="187" width="1" height="1" fill="#4a4a4a"/><rect x="32" y="154" width="1" height="1" fill="#4a4a4a"/><rect x="32" y="122" width="1" height="1" fill="#4a4a4a"/><rect x="32" y="89" width="1" height="1" fill="#4a4a4a"/><rect x="32" y="57" width="1" height="1" fill="#4a4a4a"/><rect x="32" y="24" width="1" height="1" fill="#4a4a4a"/><rect x="65" y="544" width="1" height="1" fill="#4a4a4a"/><rect x="65" y="512" width="1" height="1" fill="#4a4a4a"/><rect x="65" y="479" width="1" height="1" fill="#4a4a4a"/><rect x="65" y="447" width="1" height="1" fill="#4a4a4a"/><rect x="65" y="414" width="1" height="1" fill="#4a4a4a"/><rect x="65" y="382" width="1" height="1" fill="#4a4a4a"/><rect x="65" y="349" width="1" height="1" fill="#4a4a4a"/><rect x="65" y="317" width="1" height="1" fill="#4a4a4a"/><rect x="65" y="284" width="1" height="1" fill="#4a4a4a"/><rect x="65" y="252" width="1" height="1" fill="#4a4a4a"/><rect x="65" y="219" width="1" height="1" fill="#4a4a4a"/><rect x="65" y="187" width="1" height="1" fill="#4a4a4a"/><rect x="65" y="154" width="1" height="1" fill="#4a4a4a"/><rect x="65" y="122" width="1" height="1" fill="#4a4a4a"/><rect x="65" y="89" width="1" height="1" fill="#4a4a4a"/><rect x="65" y="57" width="1" height="1" fill="#4a4a4a"/><rect x="65" y="24" width="1" height="1" fill="#4a4a4a"/><rect x="97" y="544" width="1" height="1" fill="#4a4a4a"/><rect x="97" y="512" width="1" height="1" fill="#4a4a4a"/><rect x="97" y="479" width="1" height="1" fill="#4a4a4a"/><rect x="97" y="447" width="1" height="1" fill="#4a4a4a"/><rect x="97" y="414" width="1" height="1" fill="#4a4a4a"/><rect x="97" y="382" width="1" height="1" fill="#4a4a4a"/><rect x="97" y="349" width="1" height="1" fill="#4a4a4a"/><rect x="97" y="317" width="1" height="1" fill="#4a4a4a"/><rect x="97" y="284" width="1" height="1" fill="#4a4a4a"/><rect x="97" y="252" width="1" height="1" fill="#4a4a4a"/><rect x="97" y="219" width="1" height="1" fill="#4a4a4a"/><rect x="97" y="187" width="1" height="1" fill="#4a4a4a"/><rect x="97" y="154" width="1" height="1" fill="#4a4a4a"/><rect x="97" y="122" width="1" height="1" fill="#4a4a4a"/><rect x="97" y="89" width="1" height="1" fill="#4a4a4a"/><rect x="97" y="57" width="1" height="1" fill="#4a4a4a"/><rect x="97" y="24" width="1" height="1" fill="#4a4a4a"/><rect x="130" y="544" width="1" height="1" fill="#4a4a4a"/><rect x="130" y="512" width="1" height="1" fill="#4a4a4a"/><rect x="130" y="479" width="1" height="1" fill="#4a4a4a"/><rect x="130" y="447" width="1" height="1" fill="#4a4a4a"/><rect x="130" y="414" width="1" height="1" fill="#4a4a4a"/><rect x="130" y="382" width="1" height="1" fill="#4a4a4a"/><rect x="130" y="349" width="1" height="1" fill="#4a4a4a"/><rect x="130" y="317" width="1" height="1" fill="#4a4a4a"/><rect x="130" y="284" width="1" height="1" fill="#4a4a4a"/><rect x="130" y="252" width="1" height="1" fill="#4a4a4a"/><rect x="130" y="219" width="1" height="1" fill="#4a4a4a"/><rect x="130" y="187" width="1" height="1" fill="#4a4a4a"/><rect x="130" y="154" width="1" height="1" fill="#4a4a4a"/><rect x="130" y="122" width="1" height="1" fill="#4a4a4a"/><rect x="130" y="89" width="1" height="1" fill="#4a4a4a"/><rect x="130" y="57" width="1" height="1" fill="#4a4a4a"/><rect x="130" y="24" width="1" height="1" fill="#4a4a4a"/><rect x="162" y="544" width="1" height="1" fill="#4a4a4a"/><rect x="162" y="512" width="1" height="1" fill="#4a4a4a"/><rect x="162" y="479" width="1" height="1" fill="#4a4a4a"/><rect x="162" y="447" width="1" height="1" fill="#4a4a4a"/><rect x="162" y="414" width="1" height="1" fill="#4a4a4a"/><rect x="162" y="382" width="1" height="1" fill="#4a4a4a"/><rect x="162" y="349" width="1" height="1" fill="#4a4a4a"/><rect x="162" y="317" width="1" height="1" fill="#4a4a4a"/><rect x="162" y="284" width="1" height="1" fill="#4a4a4a"/><rect x="162" y="252" width="1" height="1" fill="#4a4a4a"/><rect x="162" y="219" width="1" height="1" fill="#4a4a4a"/><rect x="162" y="187" width="1" height="1" fill="#4a4a4a"/><rect x="162" y="154" width="1" height="1" fill="#4a4a4a"/><rect x="162" y="122" width="1" height="1" fill="#4a4a4a"/><rect x="162" y="89" width="1" height="1" fill="#4a4a4a"/><rect x="162" y="57" width="1" height="1" fill="#4a4a4a"/><rect x="162" y="24" width="1" height="1" fill="#4a4a4a"/><rect x="195" y="544" width="1" height="1" fill="#4a4a4a"/><rect x="195" y="512" width="1" height="1" fill="#4a4a4a"/><rect x="195" y="479" width="1" height="1" fill="#4a4a4a"/><rect x="195" y="447" width="1" height="1" fill="#4a4a4a"/><rect x="195" y="414" width="1" height="1" fill="#4a4a4a"/><rect x="195" y="382" width="1" height="1" fill="#4a4a4a"/><rect x="195" y="349" width="1" height="1" fill="#4a4a4a"/><rect x="195" y="317" width="1" height="1" fill="#4a4a4a"/><rect x="195" y="284" width="1" height="1" fill="#4a4a4a"/><rect x="195" y="252" width="1" height="1" fill="#4a4a4a"/><rect x="195" y="219" width="1" height="1" fill="#4a4a4a"/><rect x="195" y="187" width="1" height="1" fill="#4a4a4a"/><rect x="195" y="154" width="1" height="1" fill="#4a4a4a"/><rect x="195" y="122" width="1" height="1" fill="#4a4a4a"/><rect x="195" y="89" width="1" height="1" fill="#4a4a4a"/><rect x="195" y="57" width="1" height="1" fill="#4a4a4a"/><rect x="195" y="24" width="1" height="1" fill="#4a4a4a"/><rect x="227" y="544" width="1" height="1" fill="#4a4a4a"/><rect x="227" y="512" width="1" height="1" fill="#4a4a4a"/><rect x="227" y="479" width="1" height="1" fill="#4a4a4a"/><rect x="227" y="447" width="1" height="1" fill="#4a4a4a"/><rect x="227" y="414" width="1" height="1" fill="#4a4a4a"/><rect x="227" y="382" width="1" height="1" fill="#4a4a4a"/><rect x="227" y="349" width="1" height="1" fill="#4a4a4a"/><rect x="227" y="317" width="1" height="1" fill="#4a4a4a"/><rect x="227" y="284" width="1" height="1" fill="#4a4a4a"/><rect x="227" y="252" width="1" height="1" fill="#4a4a4a"/><rect x="227" y="219" width="1" height="1" fill="#4a4a4a"/><rect x="227" y="187" width="1" height="1" fill="#4a4a4a"/><rect x="227" y="154" width="1" height="1" fill="#4a4a4a"/><rect x="227" y="122" width="1" height="1" fill="#4a4a4a"/><rect x="227" y="89" width="1" height="1" fill="#4a4a4a"/><rect x="227" y="57" width="1" height="1" fill="#4a4a4a"/><rect x="227" y="24" width="1" height="1" fill="#4a4a4a"/><rect x="260" y="544" width="1" height="1" fill="#4a4a4a"/><rect x="260" y="512" width="1" height="1" fill="#4a4a4a"/><rect x="260" y="479" width="1" height="1" fill="#4a4a4a"/><rect x="260" y="447" width="1" height="1" fill="#4a4a4a"/><rect x="260" y="414" width="1" height="1" fill="#4a4a4a"/><rect x="260" y="382" width="1" height="1" fill="#4a4a4a"/><rect x="260" y="349" width="1" height="1" fill="#4a4a4a"/><rect x="260" y="317" width="1" height="1" fill="#4a4a4a"/><rect x="260" y="284" width="1" height="1" fill="#4a4a4a"/><rect x="260" y="252" width="1" height="1" fill="#4a4a4a"/><rect x="260" y="219" width="1" height="1" fill="#4a4a4a"/><rect x="260" y="187" width="1" height="1" fill="#4a4a4a"/><rect x="260" y="154" width="1" height="1" fill="#4a4a4a"/><rect x="260" y="122" width="1" height="1" fill="#4a4a4a"/><rect x="260" y="89" width="1" height="1" fill="#4a4a4a"/><rect x="260" y="57" width="1" height="1" fill="#4a4a4a"/><rect x="260" y="24" width="1" height="1" fill="#4a4a4a"/><rect x="292" y="544" width="1" height="1" fill="#4a4a4a"/><rect x="292" y="512" width="1" height="1" fill="#4a4a4a"/><rect x="292" y="479" width="1" height="1" fill="#4a4a4a"/><rect x="292" y="447" width="1" height="1" fill="#4a4a4a"/><rect x="292" y="414" width="1" height="1" fill="#4a4a4a"/><rect x="292" y="382" width="1" height="1" fill="#4a4a4a"/><rect x="292" y="349" width="1" height="1" fill="#4a4a4a"/><rect x="292" y="317" width="1" height="1" fill="#4a4a4a"/><rect x="292" y="284" width="1" height="1" fill="#4a4a4a"/><rect x="292" y="252" width="1" height="1" fill="#4a4a4a"/><rect x="292" y="219" width="1" height="1" fill="#4a4a4a"/><rect x="292" y="187" width="1" height="1" fill="#4a4a4a"/><rect x="292" y="154" width="1" height="1" fill="#4a4a4a"/><rect x="292" y="122" width="1" height="1" fill="#4a4a4a"/><rect x="292" y="89" width="1" height="1" fill="#4a4a4a"/><rect x="292" y="57" width="1" height="1" fill="#4a4a4a"/><rect x="292" y="24" width="1" height="1" fill="#4a4a4a"/><rect x="325" y="544" width="1" height="1" fill="#4a4a4a"/><rect x="325" y="512" width="1" height="1" fill="#4a4a4a"/><rect x="325" y="479" width="1" height="1" fill="#4a4a4a"/><rect x="325" y="447" width="1" height="1" fill="#4a4a4a"/><rect x="325" y="414" width="1" height="1" fill="#4a4a4a"/><rect x="325" y="382" width="1" height="1" fill="#4a4a4a"/><rect x="325" y="349" width="1" height="1" fill="#4a4a4a"/><rect x="325" y="317" width="1" height="1" fill="#4a4a4a"/><rect x="325" y="284" width="1" height="1" fill="#4a4a4a"/><rect x="325" y="252" width="1" height="1" fill="#4a4a4a"/><rect x="325" y="219" width="1" height="1" fill="#4a4a4a"/><rect x="325" y="187" width="1" height="1" fill="#4a4a4a"/><rect x="325" y="154" width="1" height="1" fill="#4a4a4a"/><rect x="325" y="122" width="1" height="1" fill="#4a4a4a"/><rect x="325" y="89" width="1" height="1" fill="#4a4a4a"/><rect x="325" y="57" width="1" height="1" fill="#4a4a4a"/><rect x="325" y="24" width="1" height="1" fill="#4a4a4a"/><rect x="357" y="544" width="1" height="1" fill="#4a4a4a"/><rect x="357" y="512" width="1" height="1" fill="#4a4a4a"/><rect x="357" y="479" width="1" height="1" fill="#4a4a4a"/><rect x="357" y="447" width="1" height="1" fill="#4a4a4a"/><rect x="357" y="414" width="1" height="1" fill="#4a4a4a"/><rect x="357" y="382" width="1" height="1" fill="#4a4a4a"/><rect x="357" y="349" width="1" height="1" fill="#4a4a4a"/><rect x="357" y="317" width="1" height="1" fill="#4a4a4a"/><rect x="357" y="284" width="1" height="1" fill="#4a4a4a"/><rect x="357" y="252" width="1" height="1" fill="#4a4a4a"/><rect x="357" y="219" width="1" height="1" fill="#4a4a4a"/><rect x="357" y="187" width="1" height="1" fill="#4a4a4a"/><rect x="357" y="154" width="1" height="1" fill="#4a4a4a"/><rect x="357" y="122" width="1" height="1" fill="#4a4a4a"/><rect x="357" y="89" width="1" height="1" fill="#4a4a4a"/><rect x="357" y="57" width="1" height="1" fill="#4a4a4a"/><rect x="357" y="24" width="1" height="1" fill="#4a4a4a"/><rect x="390" y="544" width="1" height="1" fill="#4a4a4a"/><rect x="390" y="512" width="1" height="1" fill="#4a4a4a"/><rect x="390" y="479" width="1" height="1" fill="#4a4a4a"/><rect x="390" y="447" width="1" height="1" fill="#4a4a4a"/><rect x="390" y="414" width="1" height="1" fill="#4a4a4a"/><rect x="390" y="382" width="1" height="1" fill="#4a4a4a"/><rect x="390" y="349" width="1" height="1" fill="#4a4a4a"/><rect x="390" y="317" width="1" height="1" fill="#4a4a4a"/><rect x="390" y="284" width="1" height="1" fill="#4a4a4a"/><rect x="390" y="252" width="1" height="1" fill="#4a4a4a"/><rect x="390" y="219" width="1" height="1" fill="#4a4a4a"/><rect x="390" y="187" width="1" height="1" fill="#4a4a4a"/><rect x="390" y="154" width="1" height="1" fill="#4a4a4a"/><rect x="390" y="122" width="1" height="1" fill="#4a4a4a"/><rect x="390" y="89" width="1" height="1" fill="#4a4a4a"/><rect x="390" y="57" width="1" height="1" fill="#4a4a4a"/><rect x="390" y="24" width="1" height="1" fill="#4a4a4a"/><rect x="422" y="544" width="1" height="1" fill="#4a4a4a"/><rect x="422" y="512" width="1" height="1" fill="#4a4a4a"/><rect x="422" y="479" width="1" height="1" fill="#4a4a4a"/><rect x="422" y="447" width="1" height="1" fill="#4a4a4a"/><rect x="422" y="414" width="1" height="1" fill="#4a4a4a"/><rect x="422" y="382" width="1" height="1" fill="#4a4a4a"/><rect x="422" y="349" width="1" height="1" fill="#4a4a4a"/><rect x="422" y="317" width="1" height="1" fill="#4a4a4a"/><rect x="422" y="284" width="1" height="1" fill="#4a4a4a"/><rect x="422" y="252" width="1" height="1" fill="#4a4a4a"/><rect x="422" y="219" width="1" height="1" fill="#4a4a4a"/><rect x="422" y="187" width="1" height="1" fill="#4a4a4a"/><rect x="422" y="154" width="1" height="1" fill="#4a4a4a"/><rect x="422" y="122" width="1" height="1" fill="#4a4a4a"/><rect x="422" y="89" width="1" height="1" fill="#4a4a4a"/><rect x="422" y="57" width="1" height="1" fill="#4a4a4a"/><rect x="422" y="24" width="1" height="1" fill="#4a4a4a"/><rect x="455" y="544" width="1" height="1" fill="#4a4a4a"/><rect x="455" y="512" width="1" height="1" fill="#4a4a4a"/><rect x="455" y="479" width="1" height="1" fill="#4a4a4a"/><rect x="455" y="447" width="1" height="1" fill="#4a4a4a"/><rect x="455" y="414" width="1" height="1" fill="#4a4a4a"/><rect x="455" y="382" width="1" height="1" fill="#4a4a4a"/><rect x="455" y="349" width="1" height="1" fill="#4a4a4a"/><rect x="455" y="317" width="1" height="1" fill="#4a4a4a"/><rect x="455" y="284" width="1" height="1" fill="#4a4a4a"/><rect x="455" y="252" width="1" height="1" fill="#4a4a4a"/><rect x="455" y="219" width="1" height="1" fill="#4a4a4a"/><rect x="455" y="187" width="1" height="1" fill="#4a4a4a"/><rect x="455" y="154" width="1" height="1" fill="#4a4a4a"/><rect x="455" y="122" width="1" height="1" fill="#4a4a4a"/><rect x="455" y="89" width="1" height="1" fill="#4a4a4a"/><rect x="455" y="57" width="1" height="1" fill="#4a4a4a"/><rect x="455" y="24" width="1" height="1" fill="#4a4a4a"/><rect x="487" y="544" width="1" height="1" fill="#4a4a4a"/><rect x="487" y="512" width="1" height="1" fill="#4a4a4a"/><rect x="487" y="479" width="1" height="1" fill="#4a4a4a"/><rect x="487" y="447" width="1" height="1" fill="#4a4a4a"/><rect x="487" y="414" width="1" height="1" fill="#4a4a4a"/><rect x="487" y="382" width="1" height="1" fill="#4a4a4a"/><rect x="487" y="349" width="1" height="1" fill="#4a4a4a"/><rect x="487" y="317" width="1" height="1" fill="#4a4a4a"/><rect x="487" y="284" width="1" height="1" fill="#4a4a4a"/><rect x="487" y="252" width="1" height="1" fill="#4a4a4a"/><rect x="487" y="219" width="1" height="1" fill="#4a4a4a"/><rect x="487" y="187" width="1" height="1" fill="#4a4a4a"/><rect x="487" y="154" width="1" height="1" fill="#4a4a4a"/><rect x="487" y="122" width="1" height="1" fill="#4a4a4a"/><rect x="487" y="89" width="1" height="1" fill="#4a4a4a"/><rect x="487" y="57" width="1" height="1" fill="#4a4a4a"/><rect x="487" y="24" width="1" height="1" fill="#4a4a4a"/><rect x="520" y="544" width="1" height="1" fill="#4a4a4a"/><rect x="520" y="512" width="1" height="1" fill="#4a4a4a"/><rect x="520" y="479" width="1" height="1" fill="#4a4a4a"/><rect x="520" y="447" width="1" height="1" fill="#4a4a4a"/><rect x="520" y="414" width="1" height="1" fill="#4a4a4a"/><rect x="520" y="382" width="1" height="1" fill="#4a4a4a"/><rect x="520" y="349" width="1" height="1" fill="#4a4a4a"/><rect x="520" y="317" width="1" height="1" fill="#4a4a4a"/><rect x="520" y="284" width="1" height="1" fill="#4a4a4a"/><rect x="520" y="252" width="1" height="1" fill="#4a4a4a"/><rect x="520" y="219" width="1" height="1" fill="#4a4a4a"/><rect x="520" y="187" width="1" height="1" fill="#4a4a4a"/><rect x="520" y="154" width="1" height="1" fill="#4a4a4a"/><rect x="520" y="122" width="1" height="1" fill="#4a4a4a"/><rect x="520" y="89" width="1" height="1" fill="#4a4a4a"/><rect x="520" y="57" width="1" height="1" fill="#4a4a4a"/><rect x="520" y="24" width="1" height="1" fill="#4a4a4a"/><rect x="552" y="544" width="1" height="1" fill="#4a4a4a"/><rect x="552" y="512" width="1" height="1" fill="#4a4a4a"/><rect x="552" y="479" width="1" height="1" fill="#4a4a4a"/><rect x="552" y="447" width="1" height="1" fill="#4a4a4a"/><rect x="552" y="414" width="1" height="1" fill="#4a4a4a"/><rect x="552" y="382" width="1" height="1" fill="#4a4a4a"/><rect x="552" y="349" width="1" height="1" fill="#4a4a4a"/><rect x="552" y="317" width="1" height="1" fill="#4a4a4a"/><rect x="552" y="284" width="1" height="1" fill="#4a4a4a"/><rect x="552" y="252" width="1" height="1" fill="#4a4a4a"/><rect x="552" y="219" width="1" height="1" fill="#4a4a4a"/><rect x="552" y="187" width="1" height="1" fill="#4a4a4a"/><rect x="552" y="154" width="1" height="1" fill="#4a4a4a"/><rect x="552" y="122" width="1" height="1" fill="#4a4a4a"/><rect x="552" y="89" width="1" height="1" fill="#4a4a4a"/><rect x="552" y="57" width="1" height="1" fill="#4a4a4a"/><rect x="552" y="24" width="1" height="1" fill="#4a4a4a"/><rect x="585" y="544" width="1" height="1" fill="#4a4a4a"/><rect x="585" y="512" width="1" height="1" fill="#4a4a4a"/><rect x="585" y="479" width="1" height="1" fill="#4a4a4a"/><rect x="585" y="447" width="1" height="1" fill="#4a4a4a"/><rect x="585" y="414" width="1" height="1" fill="#4a4a4a"/><rect x="585" y="382" width="1" height="1" fill="#4a4a4a"/><rect x="585" y="349" width="1" height="1" fill="#4a4a4a"/><rect x="585" y="317" width="1" height="1" fill="#4a4a4a"/><rect x="585" y="284" width="1" height="1" fill="#4a4a4a"/><rect x="585" y="252" width="1" height="1" fill="#4a4a4a"/><rect x="585" y="219" width="1" height="1" fill="#4a4a4a"/><rect x="585" y="187" width="1" height="1" fill="#4a4a4a"/><rect x="585" y="154" width="1" height="1" fill="#4a4a4a"/><rect x="585" y="122" width="1" height="1" fill="#4a4a4a"/><rect x="585" y="89" width="1" height="1" fill="#4a4a4a"/><rect x="585" y="57" width="1" height="1" fill="#4a4a4a"/><rect x="585" y="24" width="1" height="1" fill="#4a4a4a"/><rect x="617" y="544" width="1" height="1" fill="#4a4a4a"/><rect x="617" y="512" width="1" height="1" fill="#4a4a4a"/><rect x="617" y="479" width="1" height="1" fill="#4a4a4a"/><rect x="617" y="447" width="1" height="1" fill="#4a4a4a"/><rect x="617" y="414" width="1" height="1" fill="#4a4a4a"/><rect x="617" y="382" width="1" height="1" fill="#4a4a4a"/><rect x="617" y="349" width="1" height="1" fill="#4a4a4a"/><rect x="617" y="317" width="1" height="1" fill="#4a4a4a"/><rect x="617" y="284" width="1" height="1" fill="#4a4a4a"/><rect x="617" y="252" width="1" height="1" fill="#4a4a4a"/><rect x="617" y="219" width="1" height="1" fill="#4a4a4a"/><rect x="617" y="187" width="1" height="1" fill="#4a4a4a"/><rect x="617" y="154" width="1" height="1" fill="#4a4a4a"/><rect x="617" y="122" width="1" height="1" fill="#4a4a4a"/><rect x="617" y="89" width="1" height="1" fill="#4a4a4a"/><rect x="617" y="57" width="1" height="1" fill="#4a4a4a"/><rect x="617" y="24" width="1" height="1" fill="#4a4a4a"/><rect x="650" y="544" width="1" height="1" fill="#4a4a4a"/><rect x="650" y="512" width="1" height="1" fill="#4a4a4a"/><rect x="650" y="479" width="1" height="1" fill="#4a4a4a"/><rect x="650" y="447" width="1" height="1" fill="#4a4a4a"/><rect x="650" y="414" width="1" height="1" fill="#4a4a4a"/><rect x="650" y="382" width="1" height="1" fill="#4a4a4a"/><rect x="650" y="349" width="1" height="1" fill="#4a4a4a"/><rect x="650" y="317" width="1" height="1" fill="#4a4a4a"/><rect x="650" y="284" width="1" height="1" fill="#4a4a4a"/><rect x="650" y="252" width="1" height="1" fill="#4a4a4a"/><rect x="650" y="219" width="1" height="1" fill="#4a4a4a"/><rect x="650" y="187" width="1" height="1" fill="#4a4a4a"/><rect x="650" y="154" width="1" height="1" fill="#4a4a4a"/><rect x="650" y="122" width="1" height="1" fill="#4a4a4a"/><rect x="650" y="89" width="1" height="1" fill="#4a4a4a"/><rect x="650" y="57" width="1" height="1" fill="#4a4a4a"/><rect x="650" y="24" width="1" height="1" fill="#4a4a4a"/><rect x="682" y="544" width="1" height="1" fill="#4a4a4a"/><rect x="682" y="512" width="1" height="1" fill="#4a4a4a"/><rect x="682" y="479" width="1" height="1" fill="#4a4a4a"/><rect x="682" y="447" width="1" height="1" fill="#4a4a4a"/><rect x="682" y="414" width="1" height="1" fill="#4a4a4a"/><rect x="682" y="382" width="1" height="1" fill="#4a4a4a"/><rect x="682" y="349" width="1" height="1" fill="#4a4a4a"/><rect x="682" y="317" width="1" height="1" fill="#4a4a4a"/><rect x="682" y="284" width="1" height="1" fill="#4a4a4a"/><rect x="682" y="252" width="1" height="1" fill="#4a4a4a"/><rect x="682" y="219" width="1" height="1" fill="#4a4a4a"/><rect x="682" y="187" width="1" height="1" fill="#4a4a4a"/><rect x="682" y="154" width="1" height="1" fill="#4a4a4a"/><rect x="682" y="122" width="1" height="1" fill="#4a4a4a"/><rect x="682" y="89" width="1" height="1" fill="#4a4a4a"/><rect x="682" y="57" width="1" height="1" fill="#4a4a4a"/><rect x="682" y="24" width="1" height="1" fill="#4a4a4a"/><rect x="715" y="544" width="1" height="1" fill="#4a4a4a"/><rect x="715" y="512" width="1" height="1" fill="#4a4a4a"/><rect x="715" y="479" width="1" height="1" fill="#4a4a4a"/><rect x="715" y="447" width="1" height="1" fill="#4a4a4a"/><rect x="715" y="414" width="1" height="1" fill="#4a4a4a"/><rect x="715" y="382" width="1" height="1" fill="#4a4a4a"/><rect x="715" y="349" width="1" height="1" fill="#4a4a4a"/><rect x="715" y="317" width="1" height="1" fill="#4a4a4a"/><rect x="715" y="284" width="1" height="1" fill="#4a4a4a"/><rect x="715" y="252" width="1" height="1" fill="#4a4a4a"/><rect x="715" y="219" width="1" height="1" fill="#4a4a4a"/><rect x="715" y="187" width="1" height="1" fill="#4a4a4a"/><rect x="715" y="154" width="1" height="1" fill="#4a4a4a"/><rect x="715" y="122" width="1" height="1" fill="#4a4a4a"/><rect x="715" y="89" width="1" height="1" fill="#4a4a4a"/><rect x="715" y="57" width="1" height="1" fill="#4a4a4a"/><rect x="715" y="24" width="1" height="1" fill="#4a4a4a"/><rect x="747" y="544" width="1" height="1" fill="#4a4a4a"/><rect x="747" y="512" width="1" height="1" fill="#4a4a4a"/><rect x="747" y="479" width="1" height="1" fill="#4a4a4a"/><rect x="747" y="447" width="1" height="1" fill="#4a4a4a"/><rect x="747" y="414" width="1" height="1" fill="#4a4a4a"/><rect x="747" y="382" width="1" height="1" fill="#4a4a4a"/><rect x="747" y="349" width="1" height="1" fill="#4a4a4a"/><rect x="747" y="317" width="1" height="1" fill="#4a4a4a"/><rect x="747" y="284" width="1" height="1" fill="#4a4a4a"/><rect x="747" y="252" width="1" height="1" fill="#4a4a4a"/><rect x="747" y="219" width="1" height="1" fill="#4a4a4a"/><rect x="747" y="187" width="1" height="1" fill="#4a4a4a"/><rect x="747" y="154" width="1" height="1" fill="#4a4a4a"/><rect x="747" y="122" width="1" height="1" fill="#4a4a4a"/><rect x="747" y="89" width="1" height="1" fill="#4a4a4a"/><rect x="747" y="57" width="1" height="1" fill="#4a4a4a"/><rect x="747" y="24" width="1" height="1" fill="#4a4a4a"/><rect x="780" y="544" width="1" height="1" fill="#4a4a4a"/><rect x="780" y="512" width="1" height="1" fill="#4a4a4a"/><rect x="780" y="479" width="1" height="1" fill="#4a4a4a"/><rect x="780" y="447" width="1" height="1" fill="#4a4a4a"/><rect x="780" y="414" width="1" height="1" fill="#4a4a4a"/><rect x="780" y="382" width="1" height="1" fill="#4a4a4a"/><rect x="780" y="349" width="1" height="1" fill="#4a4a4a"/><rect x="780" y="317" width="1" height="1" fill="#4a4a4a"/><rect x="780" y="284" width="1" height="1" fill="#4a4a4a"/><rect x="780" y="252" width="1" height="1" fill="#4a4a4a"/><rect x="780" y="219" width="1" height="1" fill="#4a4a4a"/><rect x="780" y="187" width="1" height="1" fill="#4a4a4a"/><rect x="780" y="154" width="1" height="1" fill="#4a4a4a"/><rect x="780" y="122" width="1" height="1" fill="#4a4a4a"/><rect x="780" y="89" width="1" height="1" fill="#4a4a4a"/><rect x="780" y="57" width="1" height="1" fill="#4a4a4a"/><rect x="780" y="24" width="1" height="1" fill="#4a4a4a"/><rect x="812" y="544" width="1" height="1" fill="#4a4a4a"/><rect x="812" y="512" width="1" height="1" fill="#4a4a4a"/><rect x="812" y="479" width="1" height="1" fill="#4a4a4a"/><rect x="812" y="447" width="1" height="1" fill="#4a4a4a"/><rect x="812" y="414" width="1" height="1" fill="#4a4a4a"/><rect x="812" y="382" width="1" height="1" fill="#4a4a4a"/><rect x="812" y="349" width="1" height="1" fill="#4a4a4a"/><rect x="812" y="317" width="1" height="1" fill="#4a4a4a"/><rect x="812" y="284" width="1" height="1" fill="#4a4a4a"/><rect x="812" y="252" width="1" height="1" fill="#4a4a4a"/><rect x="812" y="219" width="1" height="1" fill="#4a4a4a"/><rect x="812" y="187" width="1" height="1" fill="#4a4a4a"/><rect x="812" y="154" width="1" height="1" fill="#4a4a4a"/><rect x="812" y="122" width="1" height="1" fill="#4a4a4a"/><rect x="812" y="89" width="1" height="1" fill="#4a4a4a"/><rect x="812" y="57" width="1" height="1" fill="#4a4a4a"/><rect x="812" y="24" width="1" height="1" fill="#4a4a4a"/><rect x="845" y="544" width="1" height="1" fill="#4a4a4a"/><rect x="845" y="512" width="1" height="1" fill="#4a4a4a"/><rect x="845" y="479" width="1" height="1" fill="#4a4a4a"/><rect x="845" y="447" width="1" height="1" fill="#4a4a4a"/><rect x="845" y="414" width="1" height="1" fill="#4a4a4a"/><rect x="845" y="382" width="1" height="1" fill="#4a4a4a"/><rect x="845" y="349" width="1" height="1" fill="#4a4a4a"/><rect x="845" y="317" width="1" height="1" fill="#4a4a4a"/><rect x="845" y="284" width="1" height="1" fill="#4a4a4a"/><rect x="845" y="252" width="1" height="1" fill="#4a4a4a"/><rect x="845" y="219" width="1" height="1" fill="#4a4a4a"/><rect x="845" y="187" width="1" height="1" fill="#4a4a4a"/><rect x="845" y="154" width="1" height="1" fill="#4a4a4a"/><rect x="845" y="122" width="1" height="1" fill="#4a4a4a"/><rect x="845" y="89" width="1" height="1" fill="#4a4a4a"/><rect x="845" y="57" width="1" height="1" fill="#4a4a4a"/><rect x="845" y="24" width="1" height="1" fill="#4a4a4a"/><rect x="877" y="544" width="1" height="1" fill="#4a4a4a"/><rect x="877" y="512" width="1" height="1" fill="#4a4a4a"/><rect x="877" y="479" width="1" height="1" fill="#4a4a4a"/><rect x="877" y="447" width="1" height="1" fill="#4a4a4a"/><rect x="877" y="414" width="1" height="1" fill="#4a4a4a"/><rect x="877" y="382" width="1" height="1" fill="#4a4a4a"/><rect x="877" y="349" width="1" height="1" fill="#4a4a4a"/><rect x="877" y="317" width="1" height="1" fill="#4a4a4a"/><rect x="877" y="284" width="1" height="1" fill="#4a4a4a"/><rect x="877" y="252" width="1" height="1" fill="#4a4a4a"/><rect x="877" y="219" width="1" height="1" fill="#4a4a4a"/><rect x="877" y="187" width="1" height="1" fill="#4a4a4a"/><rect x="877" y="154" width="1" height="1" fill="#4a4a4a"/><rect x="877" y="122" width="1" height="1" fill="#4a4a4a"/><rect x="877" y="89" width="1" height="1" fill="#4a4a4a"/><rect x="877" y="57" width="1" height="1" fill="#4a4a4a"/><rect x="877" y="24" width="1" height="1" fill="#4a4a4a"/><rect x="910" y="544" width="1" height="1" fill="#4a4a4a"/><rect x="910" y="512" width="1" height="1" fill="#4a4a4a"/><rect x="910" y="479" width="1" height="1" fill="#4a4a4a"/><rect x="910" y="447" width="1" height="1" fill="#4a4a4a"/><rect x="910" y="414" width="1" height="1" fill="#4a4a4a"/><rect x="910" y="382" width="1" height="1" fill="#4a4a4a"/><rect x="910" y="349" width="1" height="1" fill="#4a4a4a"/><rect x="910" y="317" width="1" height="1" fill="#4a4a4a"/><rect x="910" y="284" width="1" height="1" fill="#4a4a4a"/><rect x="910" y="252" width="1" height="1" fill="#4a4a4a"/><rect x="910" y="219" width="1" height="1" fill="#4a4a4a"/><rect x="910" y="187" width="1" height="1" fill="#4a4a4a"/><rect x="910" y="154" width="1" height="1" fill="#4a4a4a"/><rect x="910" y="122" width="1" height="1" fill="#4a4a4a"/><rect x="910" y="89" width="1" height="1" fill="#4a4a4a"/><rect x="910" y="57" width="1" height="1" fill="#4a4a4a"/><rect x="910" y="24" width="1" height="1" fill="#4a4a4a"/><rect x="942" y="544" width="1" height="1" fill="#4a4a4a"/><rect x="942" y="512" width="1" height="1" fill="#4a4a4a"/><rect x="942" y="479" width="1" height="1" fill="#4a4a4a"/><rect x="942" y="447" width="1" height="1" fill="#4a4a4a"/><rect x="942" y="414" width="1" height="1" fill="#4a4a4a"/><rect x="942" y="382" width="1" height="1" fill="#4a4a4a"/><rect x="942" y="349" width="1" height="1" fill="#4a4a4a"/><rect x="942" y="317" width="1" height="1" fill="#4a4a4a"/><rect x="942" y="284" width="1" height="1" fill="#4a4a4a"/><rect x="942" y="252" width="1" height="1" fill="#4a4a4a"/><rect x="942" y="219" width="1" height="1" fill="#4a4a4a"/><rect x="942" y="187" width="1" height="1" fill="#4a4a4a"/><rect x="942" y="154" width="1" height="1" fill="#4a4a4a"/><rect x="942" y="122" width="1" height="1" fill="#4a4a4a"/><rect x="942" y="89" width="1" height="1" fill="#4a4a4a"/><rect x="942" y="57" width="1" height="1" fill="#4a4a4a"/><rect x="942" y="24" width="1" height="1" fill="#4a4a4a"/><rect x="975" y="544" width="1" height="1" fill="#4a4a4a"/><rect x="975" y="512" width="1" height="1" fill="#4a4a4a"/><rect x="975" y="479" width="1" height="1" fill="#4a4a4a"/><rect x="975" y="447" width="1" height="1" fill="#4a4a4a"/><rect x="975" y="414" width="1" height="1" fill="#4a4a4a"/><rect x="975" y="382" width="1" height="1" fill="#4a4a4a"/><rect x="975" y="349" width="1" height="1" fill="#4a4a4a"/><rect x="975" y="317" width="1" height="1" fill="#4a4a4a"/><rect x="975" y="284" width="1" height="1" fill="#4a4a4a"/><rect x="975" y="252" width="1" height="1" fill="#4a4a4a"/><rect x="975" y="219" width="1" height="1" fill="#4a4a4a"/><rect x="975" y="187" width="1" height="1" fill="#4a4a4a"/><rect x="975" y="154" width="1" height="1" fill="#4a4a4a"/><rect x="975" y="122" width="1" height="1" fill="#4a4a4a"/><rect x="975" y="89" width="1" height="1" fill="#4a4a4a"/><rect x="975" y="57" width="1" height="1" fill="#4a4a4a"/><rect x="975" y="24" width="1" height="1" fill="#4a4a4a"/><rect x="1007" y="544" width="1" height="1" fill="#4a4a4a"/><rect x="1007" y="512" width="1" height="1" fill="#4a4a4a"/><rect x="1007" y="479" width="1" height="1" fill="#4a4a4a"/><rect x="1007" y="447" width="1" height="1" fill="#4a4a4a"/><rect x="1007" y="414" width="1" height="1" fill="#4a4a4a"/><rect x="1007" y="382" width="1" height="1" fill="#4a4a4a"/><rect x="1007" y="349" width="1" height="1" fill="#4a4a4a"/><rect x="1007" y="317" width="1" height="1" fill="#4a4a4a"/><rect x="1007" y="284" width="1" height="1" fill="#4a4a4a"/><rect x="1007" y="252" width="1" height="1" fill="#4a4a4a"/><rect x="1007" y="219" width="1" height="1" fill="#4a4a4a"/><rect x="1007" y="187" width="1" height="1" fill="#4a4a4a"/><rect x="1007" y="154" width="1" height="1" fill="#4a4a4a"/><rect x="1007" y="122" width="1" height="1" fill="#4a4a4a"/><rect x="1007" y="89" width="1" height="1" fill="#4a4a4a"/><rect x="1007" y="57" width="1" height="1" fill="#4a4a4a"/><rect x="1007" y="24" width="1" height="1" fill="#4a4a4a"/><rect x="1040" y="544" width="1" height="1" fill="#4a4a4a"/><rect x="1040" y="512" width="1" height="1" fill="#4a4a4a"/><rect x="1040" y="479" width="1" height="1" fill="#4a4a4a"/><rect x="1040" y="447" width="1" height="1" fill="#4a4a4a"/><rect x="1040" y="414" width="1" height="1" fill="#4a4a4a"/><rect x="1040" y="382" width="1" height="1" fill="#4a4a4a"/><rect x="1040" y="349" width="1" height="1" fill="#4a4a4a"/><rect x="1040" y="317" width="1" height="1" fill="#4a4a4a"/><rect x="1040" y="284" width="1" height="1" fill="#4a4a4a"/><rect x="1040" y="252" width="1" height="1" fill="#4a4a4a"/><rect x="1040" y="219" width="1" height="1" fill="#4a4a4a"/><rect x="1040" y="187" width="1" height="1" fill="#4a4a4a"/><rect x="1040" y="154" width="1" height="1" fill="#4a4a4a"/><rect x="1040" y="122" width="1" height="1" fill="#4a4a4a"/><rect x="1040" y="89" width="1" height="1" fill="#4a4a4a"/><rect x="1040" y="57" width="1" height="1" fill="#4a4a4a"/><rect x="1040" y="24" width="1" height="1" fill="#4a4a4a"/><rect x="12" y="512" width="41" height="1" fill="#7a0000"/><rect x="32" y="492" width="1" height="41" fill="#c80000"/><circle cx="32.5" cy="512.5" r="4.8" fill="none" stroke="#b00000" stroke-width="1" shape-rendering="auto"/></svg>
<svg class="a" style="left:666px;top:325px" width="86" height="86">
 <defs><radialGradient id="ring" cx=".5" cy=".5" r=".5">
  <stop offset=".76" stop-color="#000" stop-opacity="0"/>
  <stop offset=".84" stop-color="#3a4654"/>
  <stop offset=".91" stop-color="#6a7a8a"/>
  <stop offset=".96" stop-color="#5c6a78"/>
  <stop offset="1" stop-color="#000" stop-opacity="0"/>
 </radialGradient></defs>
 <circle cx="43" cy="42" r="40" fill="url(#ring)"/>
 <path d="M43 41.5 L43 65.5 L48.5 60.2 L52.6 69.7 L56.2 68.3 L52.4 59.3 L59.8 59.3 Z" fill="#000" stroke="#fff" stroke-width="2.6" stroke-linejoin="round"/><path d="M43 41.5 L43 65.5 L48.5 60.2 L52.6 69.7 L56.2 68.3 L52.4 59.3 L59.8 59.3 Z" fill="#fff" stroke="#000" stroke-width="1.1" stroke-linejoin="round" transform="translate(0 0)"/>
</svg>
<div class="a" style="left:119px;top:145px;width:0;height:0;border-left:5.5px solid transparent;border-right:5.5px solid transparent;border-top:6px solid #000"></div>
<div class="a" style="left:85px;top:359px;width:0;height:0;border-top:5.5px solid transparent;border-bottom:5.5px solid transparent;border-left:6px solid #000"></div>

</div>

<div id="cmd">
  <div class="a" style="left:0;top:0;width:1082px;height:22px;background:#fff;border-top:1px solid #bdbdbd;border-bottom:1px solid #c6c6c6"></div>
  <div class="a" style="left:5px;top:3px;font-size:13.5px;color:#1414c8;white-space:nowrap"><i>Comando:</i> blockedit</div>
  <div class="a" style="left:1px;top:30px;font-size:13px;color:#111">Comando:</div>
  <div class="a" style="left:66px;top:28px;width:988px;height:18px;background:#fff"></div>
  <div class="a" style="left:1054px;top:24px;width:28px;height:26px;background:linear-gradient(#f6f6f6,#ececec);border:1px solid #c0c0c0"></div>
  <div class="a" style="left:1061px;top:32px;width:14px;height:10px;border:1px solid #222;border-top:2px solid #222;background:#f3f3f3"></div>
</div>

<div id="status">
  <span style="left:3px;top:8px">-1,93.4</span>
  <span style="left:3px;top:28px">@-1,93.4</span>
  <div class="a" style="left:253px;top:6px;width:1px;height:36px;background:#888"></div>
  <span style="left:256px;top:8px">93.4054&lt;91°</span>
  <span style="left:256px;top:28px">@93.4054&lt;91°</span>
  <div class="a" style="left:506px;top:20px;width:6px;height:6px;border-radius:50%;background:#c4c4c4"></div>
  <span style="left:572px;top:18px">Selezionare entità o regione</span>
  <svg class="a" style="left:716px;top:6px" width="20" height="32">
 <path d="M10 1 C4.5 1, 1.3 4.8, 1.3 10.5 V21 C1.3 26.8, 5 30.5, 10 30.5 C15 30.5, 18.8 26.8, 18.8 21 V10.5 C18.8 4.8, 15.5 1, 10 1 Z" fill="#fff" stroke="#555" stroke-width=".8"/>
 <path d="M1.3 14.9 C5 13.4, 15 13.4, 18.8 14.9" fill="none" stroke="#444" stroke-width="1.3"/>
 <path d="M10 1 V3.4 M10 11.2 V13.8" stroke="#444" stroke-width="1"/>
 <rect x="8.3" y="3.4" width="3.4" height="7.6" rx="1.5" fill="#fff" stroke="#444" stroke-width=".9"/>
</svg>

  <div class="a" style="left:940px;top:20px;width:6px;height:6px;border-radius:50%;background:#c4c4c4"></div>
  <span style="left:949px;top:18px">Nessun entità selezionate.</span>
  <div class="a" style="left:1269px;top:20px;width:6px;height:6px;border-radius:50%;background:#c4c4c4"></div>
</div>

<div id="dock"><div class="a" style="left:0;top:0;width:1px;height:691px;background:#c4c4c4"></div>
<div class="a" style="left:299px;top:0;width:1px;height:691px;background:#c8c8c8"></div>
<div class="dtitle" style="left:1px;top:1px;width:298px"><div class="t" style="top:5px">Elenco dei blocchi</div></div><div class="circ" style="left:2px;top:5px"></div><svg class="a" style="left:5px;top:8px" width="8" height="8"><path d="M1.2 1.2 L6.8 6.8 M6.8 1.2 L1.2 6.8" stroke="#fff" stroke-width="1.6"/></svg><div class="circ" style="left:20px;top:5px"></div><div class="a" style="left:26px;top:8px;width:6px;height:5px;border:1.2px solid #fff"></div><div class="a" style="left:23px;top:11px;width:6px;height:5px;border:1.2px solid #fff;background:#6f6f6f"></div>
<div class="dbtn" style="left:0.8px;top:24px;width:36.6px;height:25px"></div>
<div class="dbtn" style="left:38.1px;top:24px;width:36.6px;height:25px"></div>
<div class="dbtn" style="left:75.4px;top:24px;width:36.6px;height:25px"></div>
<div class="dbtn" style="left:112.7px;top:24px;width:36.6px;height:25px"></div>
<div class="dbtn" style="left:150.0px;top:24px;width:36.6px;height:25px"></div>
<div class="dbtn" style="left:187.3px;top:24px;width:36.6px;height:25px"></div>
<div class="dbtn" style="left:224.6px;top:24px;width:36.6px;height:25px"></div>
<div class="dbtn" style="left:261.9px;top:24px;width:36.6px;height:25px"></div>
<svg class="a" style="left:10px;top:30px" width="17" height="12" viewBox="0 0 17 12"><path d="M0.6 6.8 C2 2.4, 5 0.6, 8 0.6 C11 0.6, 14 2.4, 15.6 6.4 C14 10, 11 11.6, 8 11.6 C5 11.6, 2 10, 0.6 6.8 Z" fill="#000"/><path d="M3.3 5 A4.7 4.5 0 0 0 12.7 5 Z" fill="#fff"/><circle cx="7.9" cy="5.5" r="2.7" fill="#000"/><circle cx="7.2" cy="4.7" r=".8" fill="#8a8a8a" opacity=".8"/></svg>
<svg class="a" style="left:48px;top:30px" width="17" height="12" viewBox="0 0 17 12"><path d="M0.6 6.8 C2 2.4, 5 0.6, 8 0.6 C11 0.6, 14 2.4, 15.6 6.4 C14 10, 11 11.6, 8 11.6 C5 11.6, 2 10, 0.6 6.8 Z" fill="#a8a8a8"/><path d="M3.3 5 A4.7 4.5 0 0 0 12.7 5 Z" fill="#f4f4f4"/><circle cx="7.9" cy="5.5" r="2.7" fill="#a8a8a8"/><circle cx="7.2" cy="4.7" r=".8" fill="#8a8a8a" opacity=".8"/></svg>
<svg class="a" style="left:85px;top:28px" width="16" height="16" viewBox="0 0 16 16"><path d="M6.4 2 H9.6 V6.4 H14 V9.6 H9.6 V14 H6.4 V9.6 H2 V6.4 H6.4 Z" fill="#e00000" stroke="#a00" stroke-width=".4"/></svg>
<div class="a" style="left:124px;top:35px;width:13px;height:4px;background:#f07878;opacity:1"></div>
<div class="a" style="left:158px;top:28px;width:20px;text-align:center;font-size:12px;color:#8c8c8c;letter-spacing:-0.2px;padding-top:1.5px">a|b</div>
<svg class="a" style="left:196px;top:28px" width="18" height="18" viewBox="0 0 18 18"><path d="M13.5 1.5 L16.5 4.5 L5 16 L1.5 17 L2.5 13.5 Z" fill="#e8b040" stroke="#8a6020" stroke-width=".7"/><path d="M13.5 1.5 L16.5 4.5 L15 6 L12 3 Z" fill="#e03030"/><path d="M2.5 13.5 L5 16 L1.5 17 Z" fill="#f0d8a8"/><path d="M1.5 17 L2.2 15.3 L3.2 16.3 Z" fill="#333"/></svg>
<svg class="a" style="left:235px;top:27px" width="14" height="18"><rect x="1" y="1" width="12" height="16" fill="#e8eefa" stroke="#b8c8e8" stroke-width=".6"/><path d="M5 3 C 8 3, 8 7, 7 10 V13" fill="none" stroke="#6a9af0" stroke-width="2"/><path d="M3.5 11 L7 15.5 L10.5 11 Z" fill="#6a9af0"/></svg>
<svg class="a" style="left:271px;top:28px" width="16" height="16"><rect x="3.5" y="2.5" width="10" height="10" rx="1" fill="#ea6c50" stroke="#e89080" stroke-width=".8"/><path d="M6.3 5.3 L10.7 9.7 M10.7 5.3 L6.3 9.7" stroke="#fff" stroke-width="1.5"/></svg>
<div class="a" style="left:1px;top:49px;width:298px;height:20px;background:#d6d6d6"></div>
<svg class="a" style="left:7px;top:54px" width="17" height="12" viewBox="0 0 17 12"><path d="M0.6 6.8 C2 2.4, 5 0.6, 8 0.6 C11 0.6, 14 2.4, 15.6 6.4 C14 10, 11 11.6, 8 11.6 C5 11.6, 2 10, 0.6 6.8 Z" fill="#3a4a5e"/><path d="M3.3 5 A4.7 4.5 0 0 0 12.7 5 Z" fill="#d6d6d6"/><circle cx="7.9" cy="5.5" r="2.7" fill="#3a4a5e"/><circle cx="7.2" cy="4.7" r=".8" fill="#8a8a8a" opacity=".8"/></svg>
<svg class="a" style="left:29px;top:52px;opacity:.55" width="15" height="15" viewBox="0 0 18 18"><path d="M13.5 1.5 L16.5 4.5 L5 16 L1.5 17 L2.5 13.5 Z" fill="#e8b040" stroke="#8a6020" stroke-width=".7"/><path d="M13.5 1.5 L16.5 4.5 L15 6 L12 3 Z" fill="#e03030"/><path d="M2.5 13.5 L5 16 L1.5 17 Z" fill="#f0d8a8"/><path d="M1.5 17 L2.2 15.3 L3.2 16.3 Z" fill="#333"/></svg>
<div class="a" style="left:50px;top:52.5px;font-size:13px;color:#111;white-space:nowrap">Model (*Model_Space)</div>
<svg class="a" style="left:7px;top:74px" width="17" height="12" viewBox="0 0 17 12"><path d="M0.6 6.8 C2 2.4, 5 0.6, 8 0.6 C11 0.6, 14 2.4, 15.6 6.4 C14 10, 11 11.6, 8 11.6 C5 11.6, 2 10, 0.6 6.8 Z" fill="#000"/><path d="M3.3 5 A4.7 4.5 0 0 0 12.7 5 Z" fill="#fff"/><circle cx="7.9" cy="5.5" r="2.7" fill="#000"/><circle cx="7.2" cy="4.7" r=".8" fill="#8a8a8a" opacity=".8"/></svg>
<div class="a" style="left:50px;top:72px;font-size:13px;color:#111;white-space:nowrap">Layout1 (*Paper_Space)</div>
<div class="a" style="left:0;top:200px;width:300px;height:2px;background:#c6c6c6"></div>
<div class="dtitle" style="left:1px;top:202px;width:298px"><div class="t" style="top:5px">Elenco dei livelli</div></div><div class="circ" style="left:2px;top:206px"></div><svg class="a" style="left:5px;top:209px" width="8" height="8"><path d="M1.2 1.2 L6.8 6.8 M6.8 1.2 L1.2 6.8" stroke="#fff" stroke-width="1.6"/></svg><div class="circ" style="left:20px;top:206px"></div><div class="a" style="left:26px;top:209px;width:6px;height:5px;border:1.2px solid #fff"></div><div class="a" style="left:23px;top:212px;width:6px;height:5px;border:1.2px solid #fff;background:#6f6f6f"></div>
<div class="dbtn" style="left:0.8px;top:224px;width:59.9px;height:25px"></div>
<div class="dbtn" style="left:60.5px;top:224px;width:59.9px;height:25px"></div>
<div class="dbtn" style="left:120.2px;top:224px;width:59.9px;height:25px"></div>
<div class="dbtn" style="left:179.9px;top:224px;width:59.9px;height:25px"></div>
<div class="dbtn" style="left:239.6px;top:224px;width:59.9px;height:25px"></div>
<svg class="a" style="left:22px;top:231px" width="17" height="12" viewBox="0 0 17 12"><path d="M0.6 6.8 C2 2.4, 5 0.6, 8 0.6 C11 0.6, 14 2.4, 15.6 6.4 C14 10, 11 11.6, 8 11.6 C5 11.6, 2 10, 0.6 6.8 Z" fill="#000"/><path d="M3.3 5 A4.7 4.5 0 0 0 12.7 5 Z" fill="#fff"/><circle cx="7.9" cy="5.5" r="2.7" fill="#000"/><circle cx="7.2" cy="4.7" r=".8" fill="#8a8a8a" opacity=".8"/></svg>
<svg class="a" style="left:81px;top:231px" width="17" height="12" viewBox="0 0 17 12"><path d="M0.6 6.8 C2 2.4, 5 0.6, 8 0.6 C11 0.6, 14 2.4, 15.6 6.4 C14 10, 11 11.6, 8 11.6 C5 11.6, 2 10, 0.6 6.8 Z" fill="#a8a8a8"/><path d="M3.3 5 A4.7 4.5 0 0 0 12.7 5 Z" fill="#f4f4f4"/><circle cx="7.9" cy="5.5" r="2.7" fill="#a8a8a8"/><circle cx="7.2" cy="4.7" r=".8" fill="#8a8a8a" opacity=".8"/></svg>
<svg class="a" style="left:141px;top:229px" width="16" height="16" viewBox="0 0 16 16"><path d="M6.4 2 H9.6 V6.4 H14 V9.6 H9.6 V14 H6.4 V9.6 H2 V6.4 H6.4 Z" fill="#e00000" stroke="#a00" stroke-width=".4"/></svg>
<div class="a" style="left:203px;top:235px;width:13px;height:4px;background:#e00000;opacity:1"></div>
<svg class="a" style="left:261px;top:228px" width="18" height="18" viewBox="0 0 18 18"><path d="M13.5 1.5 L16.5 4.5 L5 16 L1.5 17 L2.5 13.5 Z" fill="#e8b040" stroke="#8a6020" stroke-width=".7"/><path d="M13.5 1.5 L16.5 4.5 L15 6 L12 3 Z" fill="#e03030"/><path d="M2.5 13.5 L5 16 L1.5 17 Z" fill="#f0d8a8"/><path d="M1.5 17 L2.2 15.3 L3.2 16.3 Z" fill="#333"/></svg>
<div class="a" style="left:1px;top:249px;width:298px;height:1px;background:#c8c8c8"></div>
<div class="a" style="left:6px;top:257px;width:16px;height:9px;border:1px solid #111;background:#fff"></div>
<div class="a" style="left:28px;top:253px;font-size:13px;color:#111">0</div>
<svg class="a" style="left:238px;top:253px" width="15" height="15" viewBox="0 0 18 18"><path d="M13.5 1.5 L16.5 4.5 L5 16 L1.5 17 L2.5 13.5 Z" fill="#e8b040" stroke="#8a6020" stroke-width=".7"/><path d="M13.5 1.5 L16.5 4.5 L15 6 L12 3 Z" fill="#e03030"/><path d="M2.5 13.5 L5 16 L1.5 17 Z" fill="#f0d8a8"/><path d="M1.5 17 L2.2 15.3 L3.2 16.3 Z" fill="#333"/></svg>
<svg class="a" style="left:260px;top:256px" width="17" height="12" viewBox="0 0 17 12"><path d="M0.6 6.8 C2 2.4, 5 0.6, 8 0.6 C11 0.6, 14 2.4, 15.6 6.4 C14 10, 11 11.6, 8 11.6 C5 11.6, 2 10, 0.6 6.8 Z" fill="#000"/><path d="M3.3 5 A4.7 4.5 0 0 0 12.7 5 Z" fill="#fff"/><circle cx="7.9" cy="5.5" r="2.7" fill="#000"/><circle cx="7.2" cy="4.7" r=".8" fill="#8a8a8a" opacity=".8"/></svg>
<svg class="a" style="left:284px;top:253px" width="12" height="16"><path d="M3 7 V5 A3 3 0 0 1 9 5 V7" fill="none" stroke="#c8c8c8" stroke-width="1.6"/><rect x="1" y="7" width="10" height="8" fill="#c8c8c8"/></svg></div>


<div id="rtb"><div class="grip" style="left:7px;top:7px;width:28px;height:4px;background-image:radial-gradient(circle,#a0a0a0 0.9px,transparent 1.1px);background-size:5px 4px"></div>
<div class="a" style="left:1px;top:14px;width:44px;height:41px;border-radius:7px;background:#b6b6b6"></div>
<div class="a" style="left:1px;top:61px;width:44px;height:41px;border-radius:7px;background:#b6b6b6"></div>
<div class="a" style="left:1px;top:312px;width:44px;height:42px;border-radius:7px;background:#b6b6b6"></div>
<svg class="a" style="left:8px;top:20px" width="28" height="28"><rect x=".5" y=".5" width="27" height="27" fill="#fff" stroke="#3a3a3a" stroke-width="1"/><rect x="0" y="0" width="28" height="4.5" fill="#000"/><rect x="1" y="1" width="3" height="3" fill="#fff"/><path d="M7 14.3 L10.6 12.2 V22.6 L7 24 Z" fill="#9a9a9a" stroke="#555" stroke-width=".5"/><path d="M8.8 13.2 L10.6 12.2 V22.6 L8.8 23.4 Z" fill="#c8c8c8"/><path d="M10.6 12.2 L20.5 9 V19 L10.6 22.6 Z" fill="#f6f6f6" stroke="#555" stroke-width=".6"/><path d="M13.8 19.5 L17.9 12.7 L17.4 19 Z" fill="none" stroke="#f03030" stroke-width=".7"/></svg>
<svg class="a" style="left:8px;top:67px" width="28" height="28"><rect x=".5" y=".5" width="27" height="27" fill="#fff" stroke="#3a3a3a" stroke-width="1"/><rect x="0" y="0" width="28" height="4.5" fill="#000"/><rect x="1" y="1" width="3" height="3" fill="#fff"/><rect x="7" y="10" width="10.9" height="7.3" fill="#f4ecc4" stroke="#555" stroke-width=".7"/><circle cx="16.4" cy="16.8" r="4.4" fill="#f4ecc4" fill-opacity=".75" stroke="#555" stroke-width=".7"/></svg>
<svg class="a" style="left:8px;top:114px" width="28" height="28"><rect x=".5" y=".5" width="27" height="27" fill="#fff" stroke="#3a3a3a" stroke-width="1"/><rect x="0" y="0" width="28" height="4.5" fill="#000"/><rect x="1" y="1" width="3" height="3" fill="#fff"/><rect x="5.5" y="10.5" width="17" height="12" rx="2.5" fill="#f2f2f6" stroke="#b8c8e0" stroke-width=".8"/></svg>
<div class="hsep" style="left:4px;top:155px;width:38px;background-image:linear-gradient(90deg,#777 50%,transparent 50%)"></div>
<svg class="a" style="left:8px;top:170px" width="28" height="28"><rect x=".5" y=".5" width="27" height="27" fill="#fff" stroke="#3a3a3a" stroke-width="1"/><rect x="0" y="0" width="28" height="4.5" fill="#000"/><rect x="1" y="1" width="3" height="3" fill="#fff"/><rect x="3" y="9" width="4.5" height="3.2" rx=".8" fill="#000"/><rect x="9.8" y="9.3" width="14.5" height="2.6" rx=".5" fill="#fff" stroke="#555" stroke-width=".7"/><rect x="3" y="14" width="4.5" height="3.2" rx=".8" fill="#000"/><rect x="9.8" y="14.3" width="14.5" height="2.6" rx=".5" fill="#fff" stroke="#555" stroke-width=".7"/><rect x="3" y="19" width="4.5" height="3.2" rx=".8" fill="#000"/><rect x="9.8" y="19.3" width="14.5" height="2.6" rx=".5" fill="#fff" stroke="#555" stroke-width=".7"/></svg>
<svg class="a" style="left:8px;top:216px" width="28" height="28"><rect x=".5" y=".5" width="27" height="27" fill="#fff" stroke="#3a3a3a" stroke-width="1"/><rect x="0" y="0" width="28" height="4.5" fill="#000"/><rect x="1" y="1" width="3" height="3" fill="#fff"/><defs><linearGradient id="fun" x1="0" y1="0" x2="1" y2="0"><stop offset="0" stop-color="#666"/><stop offset=".5" stop-color="#c8c8c8"/><stop offset="1" stop-color="#777"/></linearGradient></defs><path d="M6 9 H22 L15.5 16 V23.5 H12.5 V16 Z" fill="url(#fun)" stroke="#444" stroke-width=".7"/></svg>
<svg class="a" style="left:8px;top:261px" width="28" height="28"><rect x=".5" y=".5" width="27" height="27" fill="#fff" stroke="#3a3a3a" stroke-width="1"/><rect x="0" y="0" width="28" height="4.5" fill="#000"/><rect x="1" y="1" width="3" height="3" fill="#fff"/><path d="M5 9 L11 13 V20 L5 24 Z" fill="#f4f4f4" stroke="#333" stroke-width=".8"/><rect x="11" y="12.5" width="10" height="8" rx="2" fill="#888" stroke="#444" stroke-width=".6"/><line x1="3" y1="16.5" x2="25" y2="16.5" stroke="#f08080" stroke-width=".7" stroke-dasharray="1.5 1"/></svg>
<div class="hsep" style="left:4px;top:304px;width:38px;background-image:linear-gradient(90deg,#777 50%,transparent 50%)"></div>
<svg class="a" style="left:8px;top:318px" width="28" height="28"><rect x=".5" y=".5" width="27" height="27" fill="#fff" stroke="#3a3a3a" stroke-width="1"/><rect x="0" y="0" width="28" height="4.5" fill="#000"/><rect x="1" y="1" width="3" height="3" fill="#fff"/><line x1="3" y1="9.5" x2="14" y2="9.5" stroke="#555" stroke-width=".6"/><line x1="3" y1="12.1" x2="16" y2="12.1" stroke="#555" stroke-width=".6"/><line x1="3" y1="14.7" x2="14" y2="14.7" stroke="#555" stroke-width=".6"/><line x1="3" y1="17.3" x2="16" y2="17.3" stroke="#555" stroke-width=".6"/><line x1="1" y1="22" x2="27" y2="22" stroke="#333" stroke-width=".7"/><line x1="3" y1="24.6" x2="5" y2="24.6" stroke="#333" stroke-width=".8"/><line x1="10" y1="24.6" x2="24" y2="24.6" stroke="#333" stroke-width=".9"/></svg>
<svg class="a" style="left:8px;top:365px" width="28" height="28"><rect x=".5" y=".5" width="27" height="27" fill="#fff" stroke="#3a3a3a" stroke-width="1"/><rect x="0" y="0" width="28" height="4.5" fill="#000"/><rect x="1" y="1" width="3" height="3" fill="#fff"/><rect x="8" y="8.5" width="13" height="16" rx=".6" fill="#c48a28" stroke="#8a5a10" stroke-width=".6"/><rect x="9.8" y="10" width="9.4" height="13" fill="#f4f4f4"/><rect x="11.5" y="7" width="6" height="3.2" rx=".6" fill="#8a8a80" stroke="#555" stroke-width=".4"/><g stroke="#b8b8b8" stroke-width=".6"><line x1="11" y1="13" x2="18" y2="13"/><line x1="11" y1="15" x2="18" y2="15"/><line x1="11" y1="17" x2="18" y2="17"/><line x1="11" y1="19" x2="16" y2="19"/></g><path d="M16.5 23 L19.2 20.3 V23 Z" fill="#a8a8a8"/></svg></div>

</body></html>
